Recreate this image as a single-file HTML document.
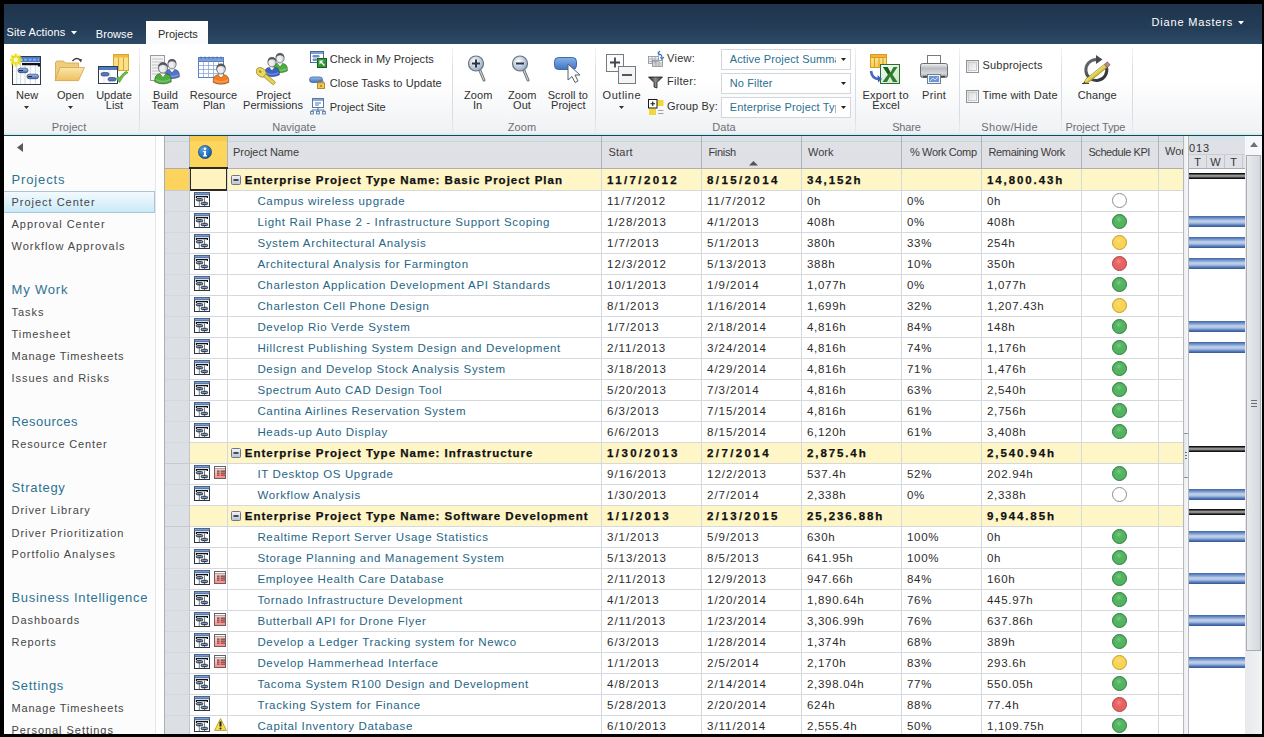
<!DOCTYPE html><html><head><meta charset="utf-8"><style>
html,body{margin:0;padding:0;}
body{width:1264px;height:737px;overflow:hidden;background:#000;position:relative;font-family:"Liberation Sans",sans-serif;}
.a{position:absolute;}
.t{position:absolute;white-space:nowrap;line-height:1;}
</style></head><body>
<div class="a" style="left:4px;top:4px;width:1258px;height:40px;background:linear-gradient(#1f344b,#243d57 60%,#2c4a68);"></div>
<div class="a" style="left:4px;top:44px;width:1258px;height:90px;background:linear-gradient(#ffffff 0%,#ffffff 40%,#f7f8f9 70%,#eff1f3 100%);"></div>
<div class="a" style="left:4px;top:133px;width:1258px;height:2px;background:linear-gradient(#e2f3f7,#c4ecf4);"></div>
<div class="a" style="left:4px;top:135px;width:1258px;height:1px;background:#1d4651;"></div>
<div class="a" style="left:4px;top:136px;width:151px;height:598px;background:#fcfcfc;"></div>
<div class="a" style="left:155px;top:136px;width:1px;height:598px;background:#e6e6e6;"></div>
<div class="a" style="left:156px;top:136px;width:8px;height:598px;background:#ffffff;"></div>
<div class="t" style="left:6.5px;top:27.09px;font-size:11px;color:#ffffff;letter-spacing:0.11px;">Site Actions</div>
<svg class="a" style="left:71px;top:31px" width="6" height="4" viewBox="0 0 6 4"><path d="M0 0H6L3 3.5Z" fill="#fff"/></svg>
<div class="t" style="left:95.8px;top:28.99px;font-size:11px;color:#ffffff;letter-spacing:0.06px;">Browse</div>
<div class="a" style="left:146px;top:21px;width:62px;height:23px;background:linear-gradient(#ffffff,#fafbfc);"></div>
<div class="t" style="left:158.0px;top:28.79px;font-size:11px;color:#2a2a2a;letter-spacing:0.0px;">Projects</div>
<div class="t" style="left:1151.6px;top:17.09px;font-size:11px;color:#ffffff;letter-spacing:0.81px;">Diane Masters</div>
<svg class="a" style="left:1238px;top:21px" width="6" height="4" viewBox="0 0 6 4"><path d="M0 0H6L3 3.5Z" fill="#fff"/></svg>
<div class="a" style="left:139px;top:48px;width:1px;height:84px;background:linear-gradient(rgba(210,214,220,0.3),#d9dde2 30%,#d9dde2 80%,rgba(210,214,220,0.3));"></div>
<div class="a" style="left:452px;top:48px;width:1px;height:84px;background:linear-gradient(rgba(210,214,220,0.3),#d9dde2 30%,#d9dde2 80%,rgba(210,214,220,0.3));"></div>
<div class="a" style="left:595px;top:48px;width:1px;height:84px;background:linear-gradient(rgba(210,214,220,0.3),#d9dde2 30%,#d9dde2 80%,rgba(210,214,220,0.3));"></div>
<div class="a" style="left:855px;top:48px;width:1px;height:84px;background:linear-gradient(rgba(210,214,220,0.3),#d9dde2 30%,#d9dde2 80%,rgba(210,214,220,0.3));"></div>
<div class="a" style="left:959px;top:48px;width:1px;height:84px;background:linear-gradient(rgba(210,214,220,0.3),#d9dde2 30%,#d9dde2 80%,rgba(210,214,220,0.3));"></div>
<div class="a" style="left:1061px;top:48px;width:1px;height:84px;background:linear-gradient(rgba(210,214,220,0.3),#d9dde2 30%,#d9dde2 80%,rgba(210,214,220,0.3));"></div>
<div class="a" style="left:1132px;top:48px;width:1px;height:84px;background:linear-gradient(rgba(210,214,220,0.3),#d9dde2 30%,#d9dde2 80%,rgba(210,214,220,0.3));"></div>
<div class="t" style="left:-81.0px;width:300px;text-align:center;top:121.59px;font-size:11px;color:#6b6f75;letter-spacing:0.03px;text-indent:0.03px;">Project</div>
<div class="t" style="left:144.0px;width:300px;text-align:center;top:121.59px;font-size:11px;color:#6b6f75;letter-spacing:0.03px;text-indent:0.03px;">Navigate</div>
<div class="t" style="left:372.0px;width:300px;text-align:center;top:121.59px;font-size:11px;color:#6b6f75;letter-spacing:0.06px;text-indent:0.06px;">Zoom</div>
<div class="t" style="left:574.0px;width:300px;text-align:center;top:121.59px;font-size:11px;color:#6b6f75;letter-spacing:0.06px;text-indent:0.06px;">Data</div>
<div class="t" style="left:756.5px;width:300px;text-align:center;top:121.59px;font-size:11px;color:#6b6f75;letter-spacing:-0.2px;text-indent:-0.2px;">Share</div>
<div class="t" style="left:859.5px;width:300px;text-align:center;top:121.59px;font-size:11px;color:#6b6f75;letter-spacing:0.4px;text-indent:0.4px;">Show/Hide</div>
<div class="t" style="left:945.5px;width:300px;text-align:center;top:121.59px;font-size:11px;color:#6b6f75;letter-spacing:-0.09px;text-indent:-0.09px;">Project Type</div>
<div class="t" style="left:-123.0px;width:300px;text-align:center;top:89.89px;font-size:11px;color:#303030;letter-spacing:0.1px;text-indent:0.1px;">New</div>
<svg class="a" style="left:24px;top:106px" width="5" height="3" viewBox="0 0 5 3"><path d="M0 0H5L2.5 3Z" fill="#333"/></svg>
<svg class="a" style="left:10px;top:53px" width="34" height="34" viewBox="0 0 34 34">
<defs><linearGradient id="nb" x1="0" y1="0" x2="0" y2="1"><stop offset="0" stop-color="#a9c1ea"/><stop offset="1" stop-color="#3f66ad"/></linearGradient>
<radialGradient id="ns"><stop offset="0" stop-color="#fffbd0"/><stop offset="0.5" stop-color="#f4e640"/><stop offset="1" stop-color="#f4e640" stop-opacity="0"/></radialGradient></defs>
<rect x="2.5" y="3.5" width="28" height="28" fill="#fff" stroke="#2f3b4d"/>
<rect x="3" y="4" width="27" height="5.2" fill="#4f7cc9"/>
<path d="M5 6.6H29" stroke="#8fb0e6" stroke-width="1.6" stroke-dasharray="3 1.5"/>
<g stroke="#c7d0dc" stroke-width="0.8"><path d="M6.7 10V31M10.5 10V31M15 10V31M20.3 10V31M25.4 10V31"/></g>
<g stroke="#e3e8ee" stroke-width="0.6"><path d="M3 14H30M3 18H30M3 22H30M3 26H30"/></g>
<path d="M12 11.2H29V13.5" fill="none" stroke="#111" stroke-width="2.2"/>
<rect x="8" y="15.2" width="10" height="4.5" rx="2.2" fill="url(#nb)" stroke="#243e6e" stroke-width="0.7"/>
<rect x="17" y="21.2" width="11.5" height="4.5" rx="2.2" fill="url(#nb)" stroke="#243e6e" stroke-width="0.7"/>
<path d="M9 17.5H13M18 23.5H22" stroke="#1b2a44" stroke-width="1"/>
<circle cx="5.8" cy="7" r="7" fill="url(#ns)"/>
<g stroke="#e8dc20" stroke-width="1.4"><path d="M5.8 0.5V13.5M-0.7 7H12.3M1.2 2.4L10.4 11.6M10.4 2.4L1.2 11.6"/></g>
<circle cx="5.8" cy="7" r="2.2" fill="#fff8c8"/>
</svg>
<div class="t" style="left:-79.5px;width:300px;text-align:center;top:89.89px;font-size:11px;color:#303030;letter-spacing:0.1px;text-indent:0.1px;">Open</div>
<svg class="a" style="left:68px;top:106px" width="5" height="3" viewBox="0 0 5 3"><path d="M0 0H5L2.5 3Z" fill="#333"/></svg>
<svg class="a" style="left:53px;top:55px" width="34" height="29" viewBox="0 0 34 29">
<defs><linearGradient id="fo" x1="0" y1="0" x2="0" y2="1"><stop offset="0" stop-color="#fbe6a6"/><stop offset="1" stop-color="#eec060"/></linearGradient></defs>
<path d="M2.5 8 Q2.5 6 4.5 6 H10.5 L12.5 8 H25.5 V25 H2.5 Z" fill="#efcd7c" stroke="#cfa24a" stroke-width="0.8"/>
<path d="M7 12.5 H31.5 L25.5 25.6 H2 Z" fill="url(#fo)" stroke="#d1a650" stroke-width="0.8"/>
<path d="M19.5 6 Q23 1.5 27.5 5" fill="none" stroke="#3a3a3a" stroke-width="1.3"/>
<path d="M25.5 4.5 L29 4 L28 7.5 Z" fill="#3a3a3a"/>
</svg>
<div class="t" style="left:-36.0px;width:300px;text-align:center;top:89.89px;font-size:11px;color:#303030;letter-spacing:0.05px;text-indent:0.05px;">Update</div>
<div class="t" style="left:-35.5px;width:300px;text-align:center;top:100.09px;font-size:11px;color:#303030;letter-spacing:0.05px;text-indent:0.05px;">List</div>
<svg class="a" style="left:97px;top:53px" width="34" height="32" viewBox="0 0 34 32">
<rect x="16.5" y="1.5" width="15" height="16" fill="#fbe08a" stroke="#d9a52c"/>
<rect x="17" y="2" width="14" height="2.5" fill="#f1b83c"/>
<path d="M21.5 4.5V17.5M26.5 4.5V17.5" stroke="#d9a52c"/>
<rect x="1.5" y="13.5" width="19" height="17" fill="#fff" stroke="#2f3b4d"/>
<rect x="2" y="14" width="18" height="3" fill="#4f7cc9"/>
<path d="M7 17V30M13 17V30" stroke="#d2d9e3" stroke-width="0.8"/>
<rect x="4" y="19.5" width="8" height="3.5" rx="1.7" fill="#5578bb" stroke="#243e6e" stroke-width="0.6"/>
<rect x="11" y="24.5" width="8" height="3.5" rx="1.7" fill="#5578bb" stroke="#243e6e" stroke-width="0.6"/>
<path d="M19.5 25.5 L22.5 29.5 Q26 22 31 19.5 L29 18.5 Q24.5 21 22.5 25 L21 23.5 Z" fill="#6cc04a" stroke="#3b8a26" stroke-width="0.7"/>
</svg>
<div class="t" style="left:15.5px;width:300px;text-align:center;top:90.09px;font-size:11px;color:#303030;letter-spacing:0.1px;text-indent:0.1px;">Build</div>
<div class="t" style="left:15.0px;width:300px;text-align:center;top:100.09px;font-size:11px;color:#303030;letter-spacing:0.1px;text-indent:0.1px;">Team</div>
<svg class="a" style="left:149px;top:55px" width="32" height="30" viewBox="0 0 32 30">
<rect x="1.5" y="0.5" width="14" height="25" fill="#f4f4f4" stroke="#9a9a9a"/>
<path d="M3 4H14M3 7H14M3 10H14M3 13H14M3 16H14M3 19H14" stroke="#c2c2c2"/>
<g transform="translate(23,12) scale(0.95)">
<path d="M-7.8 10.5 Q-8.6 3.2 -2.6 2.4 L0 5.6 L2.6 2.4 Q8.6 3.2 7.8 10.5 Q0 14.2 -7.8 10.5 Z" fill="#4f74c8" stroke="rgba(0,0,0,0.45)" stroke-width="0.7"/>
<path d="M-7 8 Q0 12 7 8" fill="none" stroke="rgba(255,255,255,0.25)" stroke-width="1.5"/>
<path d="M-2.6 2.4 L0 5.6 L2.6 2.4 Z" fill="#fff"/>
<ellipse cx="0" cy="-3" rx="4.4" ry="5.1" fill="#d3d5d9" stroke="#4e5156" stroke-width="0.7"/>
<ellipse cx="-0.6" cy="-2.2" rx="2.6" ry="3.2" fill="#eceef0"/>
<path d="M-4.4 -3.6 Q-4.6 -8.3 0 -8.2 Q4.6 -8.3 4.4 -3.6 Q2.5 -6.2 0 -6 Q-2.8 -6 -4.4 -3.6Z" fill="#55585d"/>
</g><g transform="translate(14,16) scale(1.05)">
<path d="M-7.8 10.5 Q-8.6 3.2 -2.6 2.4 L0 5.6 L2.6 2.4 Q8.6 3.2 7.8 10.5 Q0 14.2 -7.8 10.5 Z" fill="#4cae3c" stroke="rgba(0,0,0,0.45)" stroke-width="0.7"/>
<path d="M-7 8 Q0 12 7 8" fill="none" stroke="rgba(255,255,255,0.25)" stroke-width="1.5"/>
<path d="M-2.6 2.4 L0 5.6 L2.6 2.4 Z" fill="#fff"/>
<ellipse cx="0" cy="-3" rx="4.4" ry="5.1" fill="#d3d5d9" stroke="#4e5156" stroke-width="0.7"/>
<ellipse cx="-0.6" cy="-2.2" rx="2.6" ry="3.2" fill="#eceef0"/>
<path d="M-4.4 -3.6 Q-4.6 -8.3 0 -8.2 Q4.6 -8.3 4.4 -3.6 Q2.5 -6.2 0 -6 Q-2.8 -6 -4.4 -3.6Z" fill="#55585d"/>
</g></svg>
<div class="t" style="left:63.5px;width:300px;text-align:center;top:90.09px;font-size:11px;color:#303030;letter-spacing:0.05px;text-indent:0.05px;">Resource</div>
<div class="t" style="left:64.0px;width:300px;text-align:center;top:100.09px;font-size:11px;color:#303030;letter-spacing:0.05px;text-indent:0.05px;">Plan</div>
<svg class="a" style="left:197px;top:54px" width="34" height="32" viewBox="0 0 34 32">
<rect x="1.5" y="3.5" width="25" height="20" fill="#fff" stroke="#5a7fbf"/>
<rect x="1.5" y="3.5" width="25" height="4" fill="#7d9fd8" stroke="#5a7fbf"/>
<g fill="none" stroke="#4a6fb0" stroke-width="0.9"><path d="M4 5V2.5M8 5V2.5M12 5V2.5M16 5V2.5M20 5V2.5M24 5V2.5"/></g>
<path d="M1.5 11.5H26.5M1.5 15.5H26.5M1.5 19.5H26.5M6.5 7.5V23.5M11.5 7.5V23.5M16.5 7.5V23.5M21.5 7.5V23.5" stroke="#8aa6d4" stroke-width="0.8"/>
<g transform="translate(24,18) scale(1.0)">
<path d="M-7.8 10.5 Q-8.6 3.2 -2.6 2.4 L0 5.6 L2.6 2.4 Q8.6 3.2 7.8 10.5 Q0 14.2 -7.8 10.5 Z" fill="#f07d24" stroke="rgba(0,0,0,0.45)" stroke-width="0.7"/>
<path d="M-7 8 Q0 12 7 8" fill="none" stroke="rgba(255,255,255,0.25)" stroke-width="1.5"/>
<path d="M-2.6 2.4 L0 5.6 L2.6 2.4 Z" fill="#fff"/>
<ellipse cx="0" cy="-3" rx="4.4" ry="5.1" fill="#d3d5d9" stroke="#4e5156" stroke-width="0.7"/>
<ellipse cx="-0.6" cy="-2.2" rx="2.6" ry="3.2" fill="#eceef0"/>
<path d="M-4.4 -3.6 Q-4.6 -8.3 0 -8.2 Q4.6 -8.3 4.4 -3.6 Q2.5 -6.2 0 -6 Q-2.8 -6 -4.4 -3.6Z" fill="#55585d"/>
</g></svg>
<div class="t" style="left:123.5px;width:300px;text-align:center;top:90.09px;font-size:11px;color:#303030;letter-spacing:0.05px;text-indent:0.05px;">Project</div>
<div class="t" style="left:123.0px;width:300px;text-align:center;top:100.09px;font-size:11px;color:#303030;letter-spacing:-0.01px;text-indent:-0.01px;">Permissions</div>
<svg class="a" style="left:256px;top:52px" width="34" height="34" viewBox="0 0 34 34">
<g transform="translate(24,9) scale(0.95)">
<path d="M-7.8 10.5 Q-8.6 3.2 -2.6 2.4 L0 5.6 L2.6 2.4 Q8.6 3.2 7.8 10.5 Q0 14.2 -7.8 10.5 Z" fill="#4bae3c" stroke="rgba(0,0,0,0.45)" stroke-width="0.7"/>
<path d="M-7 8 Q0 12 7 8" fill="none" stroke="rgba(255,255,255,0.25)" stroke-width="1.5"/>
<path d="M-2.6 2.4 L0 5.6 L2.6 2.4 Z" fill="#fff"/>
<ellipse cx="0" cy="-3" rx="4.4" ry="5.1" fill="#d3d5d9" stroke="#4e5156" stroke-width="0.7"/>
<ellipse cx="-0.6" cy="-2.2" rx="2.6" ry="3.2" fill="#eceef0"/>
<path d="M-4.4 -3.6 Q-4.6 -8.3 0 -8.2 Q4.6 -8.3 4.4 -3.6 Q2.5 -6.2 0 -6 Q-2.8 -6 -4.4 -3.6Z" fill="#55585d"/>
</g><g transform="translate(16,13) scale(0.95)">
<path d="M-7.8 10.5 Q-8.6 3.2 -2.6 2.4 L0 5.6 L2.6 2.4 Q8.6 3.2 7.8 10.5 Q0 14.2 -7.8 10.5 Z" fill="#3b62c8" stroke="rgba(0,0,0,0.45)" stroke-width="0.7"/>
<path d="M-7 8 Q0 12 7 8" fill="none" stroke="rgba(255,255,255,0.25)" stroke-width="1.5"/>
<path d="M-2.6 2.4 L0 5.6 L2.6 2.4 Z" fill="#fff"/>
<ellipse cx="0" cy="-3" rx="4.4" ry="5.1" fill="#d3d5d9" stroke="#4e5156" stroke-width="0.7"/>
<ellipse cx="-0.6" cy="-2.2" rx="2.6" ry="3.2" fill="#eceef0"/>
<path d="M-4.4 -3.6 Q-4.6 -8.3 0 -8.2 Q4.6 -8.3 4.4 -3.6 Q2.5 -6.2 0 -6 Q-2.8 -6 -4.4 -3.6Z" fill="#55585d"/>
</g>
<g transform="rotate(40 6 21)"><ellipse cx="5" cy="21" rx="5.5" ry="4.2" fill="#ecd860" stroke="#9a8a28" stroke-width="0.8"/><rect x="9.5" y="19.3" width="13" height="3.6" rx="1" fill="#e6d050" stroke="#9a8a28" stroke-width="0.7"/><ellipse cx="3.6" cy="21" rx="1.6" ry="1.2" fill="#a8962e"/></g>
</svg>
<div class="t" style="left:329.7px;top:54.29px;font-size:11px;color:#303030;letter-spacing:0.04px;">Check in My Projects</div>
<div class="t" style="left:329.7px;top:77.69px;font-size:11px;color:#303030;letter-spacing:0.11px;">Close Tasks to Update</div>
<div class="t" style="left:329.7px;top:101.79px;font-size:11px;color:#303030;letter-spacing:-0.02px;">Project Site</div>
<svg class="a" style="left:309px;top:50px" width="18" height="18" viewBox="0 0 18 18">
<rect x="1.5" y="1.5" width="13" height="11" fill="#fff" stroke="#4a6a9a"/>
<rect x="2" y="2" width="12" height="2" fill="#7da0d8"/>
<rect x="3.5" y="5" width="7" height="2.5" rx="1.2" fill="#7090c8"/>
<rect x="3.5" y="8.5" width="5" height="2.5" rx="1.2" fill="#7090c8"/>
<rect x="8.5" y="8.5" width="9" height="9" fill="#2f9a38" stroke="#1a5e20"/>
<path d="M15.5 15.5L12 12" stroke="#fff" stroke-width="1.3"/><path d="M10.5 10.5H14.5L10.5 14.5Z" fill="#fff"/>
</svg>
<svg class="a" style="left:309px;top:76px" width="18" height="15" viewBox="0 0 18 15">
<defs><linearGradient id="lp" x1="0" y1="0" x2="0" y2="1"><stop offset="0" stop-color="#9cc0ec"/><stop offset="1" stop-color="#3f6fb8"/></linearGradient></defs>
<rect x="0.5" y="1" width="13" height="5.5" rx="2.75" fill="url(#lp)" stroke="#3a66a8" stroke-width="0.8"/>
<path d="M10 7 V5.2 Q12 2.8 14 5.2 V7" fill="none" stroke="#7a7a7a" stroke-width="1.1"/>
<rect x="8.5" y="6.8" width="7" height="5.7" fill="#f2c850" stroke="#b08420" stroke-width="0.9"/>
<rect x="11.5" y="9" width="1" height="1.8" fill="#6a4a10"/>
</svg>
<svg class="a" style="left:310px;top:98px" width="17" height="17" viewBox="0 0 17 17">
<rect x="2.5" y="0.5" width="11" height="9" fill="#fff" stroke="#5578a8"/>
<rect x="3" y="1" width="10" height="2" fill="#8aaad8"/>
<path d="M5 5H11M5 7H9" stroke="#5578a8"/>
<path d="M8 9.5V12M2 12H14M2 12V14M8 12V14M14 12V14" stroke="#5578a8" fill="none"/>
<rect x="0.5" y="13.5" width="3" height="2.5" fill="#dde6f2" stroke="#5578a8" stroke-width="0.8"/>
<rect x="6.5" y="13.5" width="3" height="2.5" fill="#dde6f2" stroke="#5578a8" stroke-width="0.8"/>
<rect x="12.5" y="13.5" width="3" height="2.5" fill="#dde6f2" stroke="#5578a8" stroke-width="0.8"/>
</svg>
<div class="t" style="left:328.2px;width:300px;text-align:center;top:89.99px;font-size:11px;color:#303030;letter-spacing:0.06px;text-indent:0.06px;">Zoom</div>
<div class="t" style="left:327.5px;width:300px;text-align:center;top:99.89px;font-size:11px;color:#303030;letter-spacing:0.06px;text-indent:0.06px;">In</div>
<svg class="a" style="left:467px;top:54px" width="20" height="29" viewBox="0 0 20 29"><defs><radialGradient id="mg43" cx="0.4" cy="0.35" r="0.7"><stop offset="0" stop-color="#ffffff"/><stop offset="1" stop-color="#8fa6c4"/></radialGradient></defs>
<path d="M12.5 15.5 L17 26" stroke="#6a6e73" stroke-width="3" stroke-linecap="round"/>
<path d="M12.5 15.5 L17 26" stroke="#c9ccd0" stroke-width="1.2" stroke-linecap="round"/>
<circle cx="9" cy="9.5" r="7.5" fill="url(#mg43)" stroke="#6a7480" stroke-width="1.2"/><path d="M5 9.5H13M9 5.5V13.5" stroke="#2f3640" stroke-width="2"/></svg>
<div class="t" style="left:372.2px;width:300px;text-align:center;top:89.99px;font-size:11px;color:#303030;letter-spacing:0.06px;text-indent:0.06px;">Zoom</div>
<div class="t" style="left:372.0px;width:300px;text-align:center;top:99.89px;font-size:11px;color:#303030;letter-spacing:0.06px;text-indent:0.06px;">Out</div>
<svg class="a" style="left:511px;top:54px" width="20" height="29" viewBox="0 0 20 29"><defs><radialGradient id="mg45" cx="0.4" cy="0.35" r="0.7"><stop offset="0" stop-color="#ffffff"/><stop offset="1" stop-color="#8fa6c4"/></radialGradient></defs>
<path d="M12.5 15.5 L17 26" stroke="#6a6e73" stroke-width="3" stroke-linecap="round"/>
<path d="M12.5 15.5 L17 26" stroke="#c9ccd0" stroke-width="1.2" stroke-linecap="round"/>
<circle cx="9" cy="9.5" r="7.5" fill="url(#mg45)" stroke="#6a7480" stroke-width="1.2"/><path d="M5 9.5H13" stroke="#2f3640" stroke-width="2"/></svg>
<div class="t" style="left:417.8px;width:300px;text-align:center;top:89.99px;font-size:11px;color:#303030;letter-spacing:0.05px;text-indent:0.05px;">Scroll to</div>
<div class="t" style="left:418.3px;width:300px;text-align:center;top:99.89px;font-size:11px;color:#303030;letter-spacing:0.05px;text-indent:0.05px;">Project</div>
<svg class="a" style="left:554px;top:57px" width="29" height="27" viewBox="0 0 29 27">
<defs><linearGradient id="sg" x1="0" y1="0" x2="0" y2="1"><stop offset="0" stop-color="#86b0ea"/><stop offset="1" stop-color="#3f73c4"/></linearGradient></defs>
<rect x="0.5" y="0.5" width="22" height="12" rx="4" fill="url(#sg)" stroke="#3d68ad"/>
<path d="M14 7 L14 23 L18 19.5 L21 25.5 L24 24 L21 18 L26 18 Z" fill="#fff" stroke="#5a5f66" stroke-width="1"/>
</svg>
<div class="t" style="left:471.6px;width:300px;text-align:center;top:89.89px;font-size:11px;color:#303030;letter-spacing:0.52px;text-indent:0.52px;">Outline</div>
<svg class="a" style="left:619px;top:106px" width="5" height="3" viewBox="0 0 5 3"><path d="M0 0H5L2.5 3Z" fill="#333"/></svg>
<svg class="a" style="left:605px;top:53px" width="33" height="32" viewBox="0 0 33 32">
<rect x="1.5" y="1.5" width="17" height="17" fill="#fbfbfb" stroke="#767b82"/>
<path d="M5 9.5H15M10 4.5V14.5" stroke="#40454c" stroke-width="1.8"/>
<rect x="13.5" y="13.5" width="17" height="17" fill="#f2f4f6" stroke="#767b82"/>
<path d="M17 22H27" stroke="#40454c" stroke-width="1.8"/>
</svg>
<div class="t" style="left:667.0px;top:52.79px;font-size:11px;color:#303030;letter-spacing:0.3px;">View:</div>
<div class="t" style="left:667.0px;top:76.29px;font-size:11px;color:#303030;letter-spacing:0.3px;">Filter:</div>
<div class="t" style="left:667.0px;top:100.89px;font-size:11px;color:#303030;letter-spacing:0.15px;">Group By:</div>
<svg class="a" style="left:647px;top:50px" width="18" height="18" viewBox="0 0 18 18">
<g stroke="#8a8f96" stroke-width="0.8" fill="#eef1f4"><rect x="1.5" y="6.5" width="10" height="7"/><rect x="5.5" y="10.5" width="10" height="6"/></g>
<path d="M1.5 9H11.5M1.5 11.5H11.5M5 6.5V13.5M8 6.5V13.5M5.5 13H15.5M5.5 15H15.5M9 10.5V16.5M12 10.5V16.5" stroke="#8a8f96" stroke-width="0.6"/>
<path d="M11 5 Q15 3 15 8" fill="none" stroke="#3b6dc0" stroke-width="1.2"/>
<path d="M13 1 L11 3 L13 5" fill="none" stroke="#3b6dc0" stroke-width="1.1"/>
<path d="M13.5 7 L15 9.5 L16.8 7" fill="none" stroke="#3b6dc0" stroke-width="1.1"/>
</svg>
<svg class="a" style="left:648px;top:76px" width="16" height="13" viewBox="0 0 16 13">
<defs><linearGradient id="fg" x1="0" x2="1"><stop offset="0" stop-color="#202020"/><stop offset="0.5" stop-color="#8a8a8a"/><stop offset="1" stop-color="#303030"/></linearGradient></defs>
<path d="M0.5 1 H14.5 L9 6.5 V12 L6 11 V6.5 Z" fill="url(#fg)" stroke="#222" stroke-width="0.8"/>
</svg>
<svg class="a" style="left:647px;top:98px" width="18" height="18" viewBox="0 0 18 18">
<rect x="10" y="2" width="6.5" height="6" fill="#f0d83a"/>
<rect x="2" y="10.5" width="7" height="6.5" fill="#f0d83a"/>
<path d="M11 12.5H16.5M11 15.5H16.5" stroke="#9a9a9a" stroke-width="0.9"/>
<rect x="1.5" y="1.5" width="8.5" height="8.5" fill="#fff" stroke="#1a1a1a"/>
<path d="M3.5 5.75H8M5.75 3.5V8" stroke="#1a1a1a" stroke-width="1.1"/>
</svg>
<div class="a" style="left:721px;top:49px;width:130px;height:21px;box-sizing:border-box;border:1px solid #d3d6da;background:#fff;"></div>
<div class="a" style="left:722px;top:50px;width:114px;height:19px;overflow:hidden;"><div class="t" style="left:7.7px;top:4.29px;font-size:11px;color:#2a6f92;letter-spacing:0.15px">Active Project Summa</div></div>
<svg class="a" style="left:841px;top:58px" width="6" height="4" viewBox="0 0 6 4"><path d="M0 0H5L2.5 3Z" fill="#222"/></svg>
<div class="a" style="left:721px;top:73px;width:130px;height:21px;box-sizing:border-box;border:1px solid #d3d6da;background:#fff;"></div>
<div class="a" style="left:722px;top:74px;width:114px;height:19px;overflow:hidden;"><div class="t" style="left:7.7px;top:4.44px;font-size:11px;color:#2a6f92;letter-spacing:0.15px">No Filter</div></div>
<svg class="a" style="left:841px;top:82px" width="6" height="4" viewBox="0 0 6 4"><path d="M0 0H5L2.5 3Z" fill="#222"/></svg>
<div class="a" style="left:721px;top:97px;width:130px;height:21px;box-sizing:border-box;border:1px solid #d3d6da;background:#fff;"></div>
<div class="a" style="left:722px;top:98px;width:114px;height:19px;overflow:hidden;"><div class="t" style="left:7.7px;top:4.19px;font-size:11px;color:#2a6f92;letter-spacing:0.15px">Enterprise Project Typ</div></div>
<svg class="a" style="left:841px;top:106px" width="6" height="4" viewBox="0 0 6 4"><path d="M0 0H5L2.5 3Z" fill="#222"/></svg>
<div class="t" style="left:735.5px;width:300px;text-align:center;top:89.89px;font-size:11px;color:#303030;letter-spacing:0.25px;text-indent:0.25px;">Export to</div>
<div class="t" style="left:736.0px;width:300px;text-align:center;top:99.69px;font-size:11px;color:#303030;letter-spacing:0.1px;text-indent:0.1px;">Excel</div>
<svg class="a" style="left:869px;top:53px" width="32" height="32" viewBox="0 0 32 32">
<defs><linearGradient id="xg" x1="0" y1="0" x2="1" y2="1"><stop offset="0" stop-color="#f4fbf2"/><stop offset="1" stop-color="#c9e8c4"/></linearGradient>
<linearGradient id="yt" x1="0" y1="0" x2="0" y2="1"><stop offset="0" stop-color="#fde79a"/><stop offset="1" stop-color="#f6cf5c"/></linearGradient></defs>
<rect x="1.5" y="1.5" width="16" height="13" fill="url(#yt)" stroke="#d99a1e"/>
<rect x="1.5" y="1.5" width="16" height="3" fill="#f0b53a" stroke="#d99a1e"/>
<path d="M5.5 4.5V14.5M10 4.5V14.5M14 4.5V14.5" stroke="#d99a1e"/>
<rect x="11.5" y="11.5" width="19" height="19" fill="url(#xg)" stroke="#2f6a34"/>
<path d="M14 14 H18.5 L21.5 19.5 L24.5 14 H28.5 L23.5 21.5 L28.5 29 H24 L21 23.5 L18 29 H13.5 L19 21.5 Z" fill="#2f7d32"/>
<path d="M14 14 H18.5 L21.5 19.5 L19 21.5 Z" fill="#1f5e22"/>
<path d="M2 18 Q3 26 10 26" fill="none" stroke="#4668c4" stroke-width="2.6"/>
<path d="M8.5 22 L13 26 L9 29.5 Z" fill="#3f5fb8"/>
</svg>
<div class="t" style="left:784.0px;width:300px;text-align:center;top:89.89px;font-size:11px;color:#303030;letter-spacing:0.3px;text-indent:0.3px;">Print</div>
<svg class="a" style="left:919px;top:54px" width="31" height="31" viewBox="0 0 31 31">
<defs><linearGradient id="pg" x1="0" y1="0" x2="0" y2="1"><stop offset="0" stop-color="#f2f3f4"/><stop offset="0.35" stop-color="#b9bcc0"/><stop offset="0.7" stop-color="#d6d8da"/><stop offset="1" stop-color="#8d9196"/></linearGradient></defs>
<rect x="8.5" y="1.5" width="13" height="9" fill="#fff" stroke="#777b80"/>
<rect x="1.5" y="9.5" width="27" height="14" rx="2" fill="url(#pg)" stroke="#6a6e73"/>
<path d="M4 22.5H26" stroke="#444" stroke-width="1.2"/>
<rect x="8.5" y="20.5" width="13" height="9" fill="#eef3fa" stroke="#6f7f98"/>
<rect x="10" y="22" width="10" height="6" fill="#6d97d4"/>
<path d="M11 27 L14 24 L16 26 L19 23" stroke="#dbe7f7" stroke-width="0.8" fill="none"/>
</svg>
<div class="a" style="left:966px;top:60px;width:13px;height:13px;box-sizing:border-box;border:1px solid #8f9398;background:linear-gradient(135deg,#d9dbde,#ffffff);"></div>
<div class="a" style="left:968px;top:62px;width:9px;height:9px;box-sizing:border-box;border:1px solid #c9cbce;background:linear-gradient(135deg,#dcdde0,#f6f6f7);"></div>
<div class="a" style="left:966px;top:90px;width:13px;height:13px;box-sizing:border-box;border:1px solid #8f9398;background:linear-gradient(135deg,#d9dbde,#ffffff);"></div>
<div class="a" style="left:968px;top:92px;width:9px;height:9px;box-sizing:border-box;border:1px solid #c9cbce;background:linear-gradient(135deg,#dcdde0,#f6f6f7);"></div>
<div class="t" style="left:982.5px;top:60.19px;font-size:11px;color:#303030;letter-spacing:0.19px;">Subprojects</div>
<div class="t" style="left:982.5px;top:90.19px;font-size:11px;color:#303030;letter-spacing:0.16px;">Time with Date</div>
<div class="t" style="left:947.2px;width:300px;text-align:center;top:90.19px;font-size:11px;color:#303030;letter-spacing:0.09px;text-indent:0.09px;">Change</div>
<svg class="a" style="left:1080px;top:52px" width="32" height="34" viewBox="0 0 32 34">
<defs><linearGradient id="cg" x1="0" y1="0" x2="1" y2="1"><stop offset="0" stop-color="#6a6d71"/><stop offset="1" stop-color="#2a2d30"/></linearGradient>
<linearGradient id="pc" x1="0" y1="0" x2="0" y2="1"><stop offset="0" stop-color="#f8f0a0"/><stop offset="0.5" stop-color="#e6d84a"/><stop offset="1" stop-color="#c9b22c"/></linearGradient></defs>
<path d="M26.4 15 A10.5 10.5 0 1 1 16.5 7.5" fill="none" stroke="url(#cg)" stroke-width="3"/>
<path d="M16 3 L22.5 7.6 L16 12 Z" fill="#45484c"/>
<g transform="translate(3,32) rotate(-38.5)">
<path d="M0 0 L5.5 -2.1 H29 V2.1 H5.5 Z" fill="url(#pc)" stroke="#8a7a30" stroke-width="0.6"/>
<path d="M0 0 L2.6 -1.1 V1.1 Z" fill="#333"/>
<path d="M8 -0.8H28M8 0.8H28" stroke="#d2bf3a" stroke-width="0.5"/>
<rect x="29" y="-2.1" width="4" height="4.2" fill="#b08a8a" stroke="#7a5a50" stroke-width="0.6"/>
</g>
<path d="M2 31.5 H9" stroke="#4a4a4a" stroke-width="1"/>
</svg>
<svg class="a" style="left:17px;top:143px" width="6" height="9" viewBox="0 0 6 9"><path d="M6 0V9L0 4.5Z" fill="#5a5a5a"/></svg>
<div class="a" style="left:4px;top:191px;width:151px;height:22px;box-sizing:border-box;border:1px solid #adc4d4;border-left:none;background:linear-gradient(#f2fafe,#dcf0fb 60%,#c9eaf9);"></div>
<div class="t" style="left:11.5px;top:173.00px;font-size:13px;color:#2c7393;letter-spacing:0.86px;">Projects</div>
<div class="t" style="left:11.5px;top:197.29px;font-size:11px;color:#464646;letter-spacing:0.98px;">Project Center</div>
<div class="t" style="left:11.5px;top:219.29px;font-size:11px;color:#464646;letter-spacing:0.97px;">Approval Center</div>
<div class="t" style="left:11.5px;top:241.29px;font-size:11px;color:#464646;letter-spacing:0.98px;">Workflow Approvals</div>
<div class="t" style="left:11.5px;top:283.30px;font-size:13px;color:#2c7393;letter-spacing:0.83px;">My Work</div>
<div class="t" style="left:11.5px;top:307.29px;font-size:11px;color:#464646;letter-spacing:0.95px;">Tasks</div>
<div class="t" style="left:11.5px;top:329.09px;font-size:11px;color:#464646;letter-spacing:0.95px;">Timesheet</div>
<div class="t" style="left:11.5px;top:351.09px;font-size:11px;color:#464646;letter-spacing:0.81px;">Manage Timesheets</div>
<div class="t" style="left:11.5px;top:372.99px;font-size:11px;color:#464646;letter-spacing:0.95px;">Issues and Risks</div>
<div class="t" style="left:11.5px;top:414.80px;font-size:13px;color:#2c7393;letter-spacing:0.48px;">Resources</div>
<div class="t" style="left:11.5px;top:439.29px;font-size:11px;color:#464646;letter-spacing:0.85px;">Resource Center</div>
<div class="t" style="left:11.5px;top:481.30px;font-size:13px;color:#2c7393;letter-spacing:0.7px;">Strategy</div>
<div class="t" style="left:11.5px;top:505.29px;font-size:11px;color:#464646;letter-spacing:0.95px;">Driver Library</div>
<div class="t" style="left:11.5px;top:527.59px;font-size:11px;color:#464646;letter-spacing:0.95px;">Driver Prioritization</div>
<div class="t" style="left:11.5px;top:549.29px;font-size:11px;color:#464646;letter-spacing:0.95px;">Portfolio Analyses</div>
<div class="t" style="left:11.5px;top:591.10px;font-size:13px;color:#2c7393;letter-spacing:0.69px;">Business Intelligence</div>
<div class="t" style="left:11.5px;top:615.29px;font-size:11px;color:#464646;letter-spacing:0.95px;">Dashboards</div>
<div class="t" style="left:11.5px;top:636.79px;font-size:11px;color:#464646;letter-spacing:0.95px;">Reports</div>
<div class="t" style="left:11.5px;top:678.80px;font-size:13px;color:#2c7393;letter-spacing:0.7px;">Settings</div>
<div class="t" style="left:11.5px;top:703.29px;font-size:11px;color:#464646;letter-spacing:0.81px;">Manage Timesheets</div>
<div class="t" style="left:11.5px;top:725.29px;font-size:11px;color:#464646;letter-spacing:0.95px;">Personal Settings</div>
<div class="a" style="left:164px;top:136px;width:1019px;height:598px;background:#ffffff;"></div>
<div class="a" style="left:164px;top:136px;width:1019px;height:32px;background:linear-gradient(#e6dcec 0px,#e6dcec 1px,#d8e3e8 1px,#d8e3e8 5px,#ccd3d6 5px,#ccd3d6 6px,#dfe1e5 6px,#e0e0e6 100%);"></div>
<div class="a" style="left:164px;top:168px;width:1019px;height:1px;background:#acafaa;"></div>
<div class="a" style="left:189px;top:136px;width:38px;height:32px;background:linear-gradient(#f6c84a 0px,#f8cc50 5px,#fcd65e 6px,#fbd45a 100%);"></div>
<div class="a" style="left:164px;top:136px;width:1px;height:32px;background:#aeb3ba;"></div>
<div class="a" style="left:189px;top:136px;width:1px;height:32px;background:#aeb3ba;"></div>
<div class="a" style="left:227px;top:136px;width:1px;height:32px;background:#aeb3ba;"></div>
<div class="a" style="left:601px;top:136px;width:1px;height:32px;background:#aeb3ba;"></div>
<div class="a" style="left:701px;top:136px;width:1px;height:32px;background:#aeb3ba;"></div>
<div class="a" style="left:801px;top:136px;width:1px;height:32px;background:#aeb3ba;"></div>
<div class="a" style="left:901px;top:136px;width:1px;height:32px;background:#aeb3ba;"></div>
<div class="a" style="left:981px;top:136px;width:1px;height:32px;background:#aeb3ba;"></div>
<div class="a" style="left:1081px;top:136px;width:1px;height:32px;background:#aeb3ba;"></div>
<div class="a" style="left:1158px;top:136px;width:1px;height:32px;background:#aeb3ba;"></div>
<div class="t" style="left:233.0px;top:146.99px;font-size:11px;color:#3c3c3c;letter-spacing:-0.05px;">Project Name</div>
<div class="t" style="left:608.6px;top:146.99px;font-size:11px;color:#3c3c3c;letter-spacing:0.19px;">Start</div>
<div class="t" style="left:708.4px;top:146.99px;font-size:11px;color:#3c3c3c;letter-spacing:-0.3px;">Finish</div>
<svg class="a" style="left:749px;top:161px" width="9" height="5" viewBox="0 0 9 5"><path d="M0 4.5H9L4.5 0Z" fill="#555"/></svg>
<div class="t" style="left:808.0px;top:146.99px;font-size:11px;color:#3c3c3c;letter-spacing:0.0px;">Work</div>
<div class="t" style="left:910.0px;top:146.99px;font-size:11px;color:#3c3c3c;letter-spacing:-0.37px;">% Work Comp</div>
<div class="t" style="left:988.4px;top:146.99px;font-size:11px;color:#3c3c3c;letter-spacing:-0.32px;">Remaining Work</div>
<div class="t" style="left:1088.4px;top:146.99px;font-size:11px;color:#3c3c3c;letter-spacing:-0.42px;">Schedule KPI</div>
<div class="a" style="left:1159px;top:136px;width:24px;height:32px;overflow:hidden"><div class="t" style="left:6px;top:10.39px;font-size:11px;color:#3c3c3c;letter-spacing:0px">Work</div></div>
<svg class="a" style="left:198px;top:145px" width="14" height="14" viewBox="0 0 14 14">
<defs><radialGradient id="ig" cx="0.35" cy="0.3" r="0.8"><stop offset="0" stop-color="#5aa8e8"/><stop offset="1" stop-color="#0d4f9e"/></radialGradient></defs>
<circle cx="7" cy="7" r="6.6" fill="url(#ig)" stroke="#0b3f7e" stroke-width="0.6"/>
<circle cx="7" cy="3.7" r="1.3" fill="#fff"/>
<path d="M5.2 5.9H8V10.2H9V11.4H5V10.2H6V7.1H5.2Z" fill="#fff"/>
</svg>
<div class="a" style="left:164px;top:169px;width:25px;height:21px;background:#fcd35c;"></div>
<div class="a" style="left:189px;top:169px;width:994px;height:21px;background:#fff6c7;"></div>
<div class="a" style="left:164px;top:190px;width:1019px;height:1px;background:#d5d8dd;"></div>
<div class="a" style="left:164px;top:190px;width:25px;height:1px;background:#c7cbd1;"></div>
<svg class="a" style="left:231px;top:175px" width="10" height="10" viewBox="0 0 10 10"><defs><linearGradient id="mb0" x1="0" y1="0" x2="0" y2="1"><stop offset="0" stop-color="#f4f7fb"/><stop offset="1" stop-color="#b4c2d4"/></linearGradient></defs><rect x="0.5" y="0.5" width="9" height="9" rx="1" fill="url(#mb0)" stroke="#6f7680"/><path d="M2.5 5H7.5" stroke="#1a1a1a" stroke-width="1.5"/></svg>
<div class="t" style="left:244.8px;top:174.87px;font-size:11.5px;color:#111;letter-spacing:1.0px;font-weight:700;-webkit-text-stroke:0.25px #111;">Enterprise Project Type Name: Basic Project Plan</div>
<div class="t" style="left:607.0px;top:174.87px;font-size:11.5px;color:#111;letter-spacing:2.4px;font-weight:700;-webkit-text-stroke:0.25px #111;">11/7/2012</div>
<div class="t" style="left:707.0px;top:174.87px;font-size:11.5px;color:#111;letter-spacing:2.4px;font-weight:700;-webkit-text-stroke:0.25px #111;">8/15/2014</div>
<div class="t" style="left:807.0px;top:174.87px;font-size:11.5px;color:#111;letter-spacing:1.9px;font-weight:700;-webkit-text-stroke:0.25px #111;">34,152h</div>
<div class="t" style="left:987.0px;top:174.87px;font-size:11.5px;color:#111;letter-spacing:1.9px;font-weight:700;-webkit-text-stroke:0.25px #111;">14,800.43h</div>
<div class="a" style="left:164px;top:191px;width:25px;height:20px;background:#dcdfe4;"></div>
<div class="a" style="left:164px;top:211px;width:1019px;height:1px;background:#d5d8dd;"></div>
<svg class="a" style="left:194px;top:192px" width="16" height="15" viewBox="0 0 16 15">
<defs><linearGradient id="pt" x1="0" y1="0" x2="0" y2="1"><stop offset="0" stop-color="#9cb6dc"/><stop offset="1" stop-color="#4f76b4"/></linearGradient>
<linearGradient id="po" x1="0" y1="0" x2="0" y2="1"><stop offset="0" stop-color="#a9bedc"/><stop offset="1" stop-color="#4f6f9c"/></linearGradient></defs>
<rect x="0.5" y="0.5" width="15" height="14" fill="#fff" stroke="#2c3542"/>
<rect x="0.5" y="0.5" width="15" height="2.4" fill="url(#pt)" stroke="#3c5c8e" stroke-width="0.6"/>
<path d="M5.3 8.5V14.5M10.5 5.5V10.5M10.5 12.5V14.5" stroke="#3a4350" stroke-width="0.7"/>
<path d="M2.4 6V4.6H13.4V6" fill="none" stroke="#111" stroke-width="1.2"/>
<rect x="2.3" y="6.6" width="6.4" height="2.2" rx="1.1" fill="url(#po)" stroke="#18222f" stroke-width="0.9"/>
<rect x="7.2" y="10.3" width="6.4" height="2.4" rx="1.2" fill="url(#po)" stroke="#18222f" stroke-width="0.9"/>
</svg>
<div class="t" style="left:257.4px;top:195.87px;font-size:11.5px;color:#266585;letter-spacing:0.65px;">Campus wireless upgrade</div>
<div class="t" style="left:607.0px;top:195.87px;font-size:11.5px;color:#2b2b2b;letter-spacing:0.98px;">11/7/2012</div>
<div class="t" style="left:707.0px;top:195.87px;font-size:11.5px;color:#2b2b2b;letter-spacing:0.98px;">11/7/2012</div>
<div class="t" style="left:807.0px;top:195.87px;font-size:11.5px;color:#2b2b2b;letter-spacing:0.7px;">0h</div>
<div class="t" style="left:907.0px;top:195.87px;font-size:11.5px;color:#2b2b2b;letter-spacing:0.7px;">0%</div>
<div class="t" style="left:987.0px;top:195.87px;font-size:11.5px;color:#2b2b2b;letter-spacing:0.7px;">0h</div>
<svg class="a" style="left:1112px;top:193px" width="15" height="15" viewBox="0 0 15 15"><circle cx="7.5" cy="7.5" r="7" fill="#fff" stroke="#8d8d8d" stroke-width="1"/></svg>
<div class="a" style="left:164px;top:212px;width:25px;height:20px;background:#dcdfe4;"></div>
<div class="a" style="left:164px;top:232px;width:1019px;height:1px;background:#d5d8dd;"></div>
<svg class="a" style="left:194px;top:213px" width="16" height="15" viewBox="0 0 16 15">
<defs><linearGradient id="pt" x1="0" y1="0" x2="0" y2="1"><stop offset="0" stop-color="#9cb6dc"/><stop offset="1" stop-color="#4f76b4"/></linearGradient>
<linearGradient id="po" x1="0" y1="0" x2="0" y2="1"><stop offset="0" stop-color="#a9bedc"/><stop offset="1" stop-color="#4f6f9c"/></linearGradient></defs>
<rect x="0.5" y="0.5" width="15" height="14" fill="#fff" stroke="#2c3542"/>
<rect x="0.5" y="0.5" width="15" height="2.4" fill="url(#pt)" stroke="#3c5c8e" stroke-width="0.6"/>
<path d="M5.3 8.5V14.5M10.5 5.5V10.5M10.5 12.5V14.5" stroke="#3a4350" stroke-width="0.7"/>
<path d="M2.4 6V4.6H13.4V6" fill="none" stroke="#111" stroke-width="1.2"/>
<rect x="2.3" y="6.6" width="6.4" height="2.2" rx="1.1" fill="url(#po)" stroke="#18222f" stroke-width="0.9"/>
<rect x="7.2" y="10.3" width="6.4" height="2.4" rx="1.2" fill="url(#po)" stroke="#18222f" stroke-width="0.9"/>
</svg>
<div class="t" style="left:257.4px;top:216.87px;font-size:11.5px;color:#266585;letter-spacing:0.65px;">Light Rail Phase 2 - Infrastructure Support Scoping</div>
<div class="t" style="left:607.0px;top:216.87px;font-size:11.5px;color:#2b2b2b;letter-spacing:0.98px;">1/28/2013</div>
<div class="t" style="left:707.0px;top:216.87px;font-size:11.5px;color:#2b2b2b;letter-spacing:0.98px;">4/1/2013</div>
<div class="t" style="left:807.0px;top:216.87px;font-size:11.5px;color:#2b2b2b;letter-spacing:0.7px;">408h</div>
<div class="t" style="left:907.0px;top:216.87px;font-size:11.5px;color:#2b2b2b;letter-spacing:0.7px;">0%</div>
<div class="t" style="left:987.0px;top:216.87px;font-size:11.5px;color:#2b2b2b;letter-spacing:0.7px;">408h</div>
<svg class="a" style="left:1112px;top:214px" width="15" height="15" viewBox="0 0 15 15"><defs><radialGradient id="k2" cx="0.45" cy="0.35" r="0.7"><stop offset="0" stop-color="#ffffff" stop-opacity="0.3"/><stop offset="0.5" stop-color="#52b460" stop-opacity="0"/></radialGradient></defs><circle cx="7.5" cy="7.5" r="7" fill="#52b460" stroke="#2f7a3a" stroke-width="1"/><circle cx="7.5" cy="7.5" r="6.5" fill="url(#k2)"/></svg>
<div class="a" style="left:164px;top:233px;width:25px;height:20px;background:#dcdfe4;"></div>
<div class="a" style="left:164px;top:253px;width:1019px;height:1px;background:#d5d8dd;"></div>
<svg class="a" style="left:194px;top:234px" width="16" height="15" viewBox="0 0 16 15">
<defs><linearGradient id="pt" x1="0" y1="0" x2="0" y2="1"><stop offset="0" stop-color="#9cb6dc"/><stop offset="1" stop-color="#4f76b4"/></linearGradient>
<linearGradient id="po" x1="0" y1="0" x2="0" y2="1"><stop offset="0" stop-color="#a9bedc"/><stop offset="1" stop-color="#4f6f9c"/></linearGradient></defs>
<rect x="0.5" y="0.5" width="15" height="14" fill="#fff" stroke="#2c3542"/>
<rect x="0.5" y="0.5" width="15" height="2.4" fill="url(#pt)" stroke="#3c5c8e" stroke-width="0.6"/>
<path d="M5.3 8.5V14.5M10.5 5.5V10.5M10.5 12.5V14.5" stroke="#3a4350" stroke-width="0.7"/>
<path d="M2.4 6V4.6H13.4V6" fill="none" stroke="#111" stroke-width="1.2"/>
<rect x="2.3" y="6.6" width="6.4" height="2.2" rx="1.1" fill="url(#po)" stroke="#18222f" stroke-width="0.9"/>
<rect x="7.2" y="10.3" width="6.4" height="2.4" rx="1.2" fill="url(#po)" stroke="#18222f" stroke-width="0.9"/>
</svg>
<div class="t" style="left:257.4px;top:237.87px;font-size:11.5px;color:#266585;letter-spacing:0.65px;">System Architectural Analysis</div>
<div class="t" style="left:607.0px;top:237.87px;font-size:11.5px;color:#2b2b2b;letter-spacing:0.98px;">1/7/2013</div>
<div class="t" style="left:707.0px;top:237.87px;font-size:11.5px;color:#2b2b2b;letter-spacing:0.98px;">5/1/2013</div>
<div class="t" style="left:807.0px;top:237.87px;font-size:11.5px;color:#2b2b2b;letter-spacing:0.7px;">380h</div>
<div class="t" style="left:907.0px;top:237.87px;font-size:11.5px;color:#2b2b2b;letter-spacing:0.7px;">33%</div>
<div class="t" style="left:987.0px;top:237.87px;font-size:11.5px;color:#2b2b2b;letter-spacing:0.7px;">254h</div>
<svg class="a" style="left:1112px;top:235px" width="15" height="15" viewBox="0 0 15 15"><defs><radialGradient id="k3" cx="0.45" cy="0.35" r="0.7"><stop offset="0" stop-color="#ffffff" stop-opacity="0.3"/><stop offset="0.5" stop-color="#f8d454" stop-opacity="0"/></radialGradient></defs><circle cx="7.5" cy="7.5" r="7" fill="#f8d454" stroke="#c99a2c" stroke-width="1"/><circle cx="7.5" cy="7.5" r="6.5" fill="url(#k3)"/></svg>
<div class="a" style="left:164px;top:254px;width:25px;height:20px;background:#dcdfe4;"></div>
<div class="a" style="left:164px;top:274px;width:1019px;height:1px;background:#d5d8dd;"></div>
<svg class="a" style="left:194px;top:255px" width="16" height="15" viewBox="0 0 16 15">
<defs><linearGradient id="pt" x1="0" y1="0" x2="0" y2="1"><stop offset="0" stop-color="#9cb6dc"/><stop offset="1" stop-color="#4f76b4"/></linearGradient>
<linearGradient id="po" x1="0" y1="0" x2="0" y2="1"><stop offset="0" stop-color="#a9bedc"/><stop offset="1" stop-color="#4f6f9c"/></linearGradient></defs>
<rect x="0.5" y="0.5" width="15" height="14" fill="#fff" stroke="#2c3542"/>
<rect x="0.5" y="0.5" width="15" height="2.4" fill="url(#pt)" stroke="#3c5c8e" stroke-width="0.6"/>
<path d="M5.3 8.5V14.5M10.5 5.5V10.5M10.5 12.5V14.5" stroke="#3a4350" stroke-width="0.7"/>
<path d="M2.4 6V4.6H13.4V6" fill="none" stroke="#111" stroke-width="1.2"/>
<rect x="2.3" y="6.6" width="6.4" height="2.2" rx="1.1" fill="url(#po)" stroke="#18222f" stroke-width="0.9"/>
<rect x="7.2" y="10.3" width="6.4" height="2.4" rx="1.2" fill="url(#po)" stroke="#18222f" stroke-width="0.9"/>
</svg>
<div class="t" style="left:257.4px;top:258.87px;font-size:11.5px;color:#266585;letter-spacing:0.65px;">Architectural Analysis for Farmington</div>
<div class="t" style="left:607.0px;top:258.87px;font-size:11.5px;color:#2b2b2b;letter-spacing:0.98px;">12/3/2012</div>
<div class="t" style="left:707.0px;top:258.87px;font-size:11.5px;color:#2b2b2b;letter-spacing:0.98px;">5/13/2013</div>
<div class="t" style="left:807.0px;top:258.87px;font-size:11.5px;color:#2b2b2b;letter-spacing:0.7px;">388h</div>
<div class="t" style="left:907.0px;top:258.87px;font-size:11.5px;color:#2b2b2b;letter-spacing:0.7px;">10%</div>
<div class="t" style="left:987.0px;top:258.87px;font-size:11.5px;color:#2b2b2b;letter-spacing:0.7px;">350h</div>
<svg class="a" style="left:1112px;top:256px" width="15" height="15" viewBox="0 0 15 15"><defs><radialGradient id="k4" cx="0.45" cy="0.35" r="0.7"><stop offset="0" stop-color="#ffffff" stop-opacity="0.3"/><stop offset="0.5" stop-color="#e96262" stop-opacity="0"/></radialGradient></defs><circle cx="7.5" cy="7.5" r="7" fill="#e96262" stroke="#a84444" stroke-width="1"/><circle cx="7.5" cy="7.5" r="6.5" fill="url(#k4)"/></svg>
<div class="a" style="left:164px;top:275px;width:25px;height:20px;background:#dcdfe4;"></div>
<div class="a" style="left:164px;top:295px;width:1019px;height:1px;background:#d5d8dd;"></div>
<svg class="a" style="left:194px;top:276px" width="16" height="15" viewBox="0 0 16 15">
<defs><linearGradient id="pt" x1="0" y1="0" x2="0" y2="1"><stop offset="0" stop-color="#9cb6dc"/><stop offset="1" stop-color="#4f76b4"/></linearGradient>
<linearGradient id="po" x1="0" y1="0" x2="0" y2="1"><stop offset="0" stop-color="#a9bedc"/><stop offset="1" stop-color="#4f6f9c"/></linearGradient></defs>
<rect x="0.5" y="0.5" width="15" height="14" fill="#fff" stroke="#2c3542"/>
<rect x="0.5" y="0.5" width="15" height="2.4" fill="url(#pt)" stroke="#3c5c8e" stroke-width="0.6"/>
<path d="M5.3 8.5V14.5M10.5 5.5V10.5M10.5 12.5V14.5" stroke="#3a4350" stroke-width="0.7"/>
<path d="M2.4 6V4.6H13.4V6" fill="none" stroke="#111" stroke-width="1.2"/>
<rect x="2.3" y="6.6" width="6.4" height="2.2" rx="1.1" fill="url(#po)" stroke="#18222f" stroke-width="0.9"/>
<rect x="7.2" y="10.3" width="6.4" height="2.4" rx="1.2" fill="url(#po)" stroke="#18222f" stroke-width="0.9"/>
</svg>
<div class="t" style="left:257.4px;top:279.87px;font-size:11.5px;color:#266585;letter-spacing:0.65px;">Charleston Application Development API Standards</div>
<div class="t" style="left:607.0px;top:279.87px;font-size:11.5px;color:#2b2b2b;letter-spacing:0.98px;">10/1/2013</div>
<div class="t" style="left:707.0px;top:279.87px;font-size:11.5px;color:#2b2b2b;letter-spacing:0.98px;">1/9/2014</div>
<div class="t" style="left:807.0px;top:279.87px;font-size:11.5px;color:#2b2b2b;letter-spacing:0.7px;">1,077h</div>
<div class="t" style="left:907.0px;top:279.87px;font-size:11.5px;color:#2b2b2b;letter-spacing:0.7px;">0%</div>
<div class="t" style="left:987.0px;top:279.87px;font-size:11.5px;color:#2b2b2b;letter-spacing:0.7px;">1,077h</div>
<svg class="a" style="left:1112px;top:277px" width="15" height="15" viewBox="0 0 15 15"><defs><radialGradient id="k5" cx="0.45" cy="0.35" r="0.7"><stop offset="0" stop-color="#ffffff" stop-opacity="0.3"/><stop offset="0.5" stop-color="#52b460" stop-opacity="0"/></radialGradient></defs><circle cx="7.5" cy="7.5" r="7" fill="#52b460" stroke="#2f7a3a" stroke-width="1"/><circle cx="7.5" cy="7.5" r="6.5" fill="url(#k5)"/></svg>
<div class="a" style="left:164px;top:296px;width:25px;height:20px;background:#dcdfe4;"></div>
<div class="a" style="left:164px;top:316px;width:1019px;height:1px;background:#d5d8dd;"></div>
<svg class="a" style="left:194px;top:297px" width="16" height="15" viewBox="0 0 16 15">
<defs><linearGradient id="pt" x1="0" y1="0" x2="0" y2="1"><stop offset="0" stop-color="#9cb6dc"/><stop offset="1" stop-color="#4f76b4"/></linearGradient>
<linearGradient id="po" x1="0" y1="0" x2="0" y2="1"><stop offset="0" stop-color="#a9bedc"/><stop offset="1" stop-color="#4f6f9c"/></linearGradient></defs>
<rect x="0.5" y="0.5" width="15" height="14" fill="#fff" stroke="#2c3542"/>
<rect x="0.5" y="0.5" width="15" height="2.4" fill="url(#pt)" stroke="#3c5c8e" stroke-width="0.6"/>
<path d="M5.3 8.5V14.5M10.5 5.5V10.5M10.5 12.5V14.5" stroke="#3a4350" stroke-width="0.7"/>
<path d="M2.4 6V4.6H13.4V6" fill="none" stroke="#111" stroke-width="1.2"/>
<rect x="2.3" y="6.6" width="6.4" height="2.2" rx="1.1" fill="url(#po)" stroke="#18222f" stroke-width="0.9"/>
<rect x="7.2" y="10.3" width="6.4" height="2.4" rx="1.2" fill="url(#po)" stroke="#18222f" stroke-width="0.9"/>
</svg>
<div class="t" style="left:257.4px;top:300.87px;font-size:11.5px;color:#266585;letter-spacing:0.65px;">Charleston Cell Phone Design</div>
<div class="t" style="left:607.0px;top:300.87px;font-size:11.5px;color:#2b2b2b;letter-spacing:0.98px;">8/1/2013</div>
<div class="t" style="left:707.0px;top:300.87px;font-size:11.5px;color:#2b2b2b;letter-spacing:0.98px;">1/16/2014</div>
<div class="t" style="left:807.0px;top:300.87px;font-size:11.5px;color:#2b2b2b;letter-spacing:0.7px;">1,699h</div>
<div class="t" style="left:907.0px;top:300.87px;font-size:11.5px;color:#2b2b2b;letter-spacing:0.7px;">32%</div>
<div class="t" style="left:987.0px;top:300.87px;font-size:11.5px;color:#2b2b2b;letter-spacing:0.7px;">1,207.43h</div>
<svg class="a" style="left:1112px;top:298px" width="15" height="15" viewBox="0 0 15 15"><defs><radialGradient id="k6" cx="0.45" cy="0.35" r="0.7"><stop offset="0" stop-color="#ffffff" stop-opacity="0.3"/><stop offset="0.5" stop-color="#f8d454" stop-opacity="0"/></radialGradient></defs><circle cx="7.5" cy="7.5" r="7" fill="#f8d454" stroke="#c99a2c" stroke-width="1"/><circle cx="7.5" cy="7.5" r="6.5" fill="url(#k6)"/></svg>
<div class="a" style="left:164px;top:317px;width:25px;height:20px;background:#dcdfe4;"></div>
<div class="a" style="left:164px;top:337px;width:1019px;height:1px;background:#d5d8dd;"></div>
<svg class="a" style="left:194px;top:318px" width="16" height="15" viewBox="0 0 16 15">
<defs><linearGradient id="pt" x1="0" y1="0" x2="0" y2="1"><stop offset="0" stop-color="#9cb6dc"/><stop offset="1" stop-color="#4f76b4"/></linearGradient>
<linearGradient id="po" x1="0" y1="0" x2="0" y2="1"><stop offset="0" stop-color="#a9bedc"/><stop offset="1" stop-color="#4f6f9c"/></linearGradient></defs>
<rect x="0.5" y="0.5" width="15" height="14" fill="#fff" stroke="#2c3542"/>
<rect x="0.5" y="0.5" width="15" height="2.4" fill="url(#pt)" stroke="#3c5c8e" stroke-width="0.6"/>
<path d="M5.3 8.5V14.5M10.5 5.5V10.5M10.5 12.5V14.5" stroke="#3a4350" stroke-width="0.7"/>
<path d="M2.4 6V4.6H13.4V6" fill="none" stroke="#111" stroke-width="1.2"/>
<rect x="2.3" y="6.6" width="6.4" height="2.2" rx="1.1" fill="url(#po)" stroke="#18222f" stroke-width="0.9"/>
<rect x="7.2" y="10.3" width="6.4" height="2.4" rx="1.2" fill="url(#po)" stroke="#18222f" stroke-width="0.9"/>
</svg>
<div class="t" style="left:257.4px;top:321.87px;font-size:11.5px;color:#266585;letter-spacing:0.65px;">Develop Rio Verde System</div>
<div class="t" style="left:607.0px;top:321.87px;font-size:11.5px;color:#2b2b2b;letter-spacing:0.98px;">1/7/2013</div>
<div class="t" style="left:707.0px;top:321.87px;font-size:11.5px;color:#2b2b2b;letter-spacing:0.98px;">2/18/2014</div>
<div class="t" style="left:807.0px;top:321.87px;font-size:11.5px;color:#2b2b2b;letter-spacing:0.7px;">4,816h</div>
<div class="t" style="left:907.0px;top:321.87px;font-size:11.5px;color:#2b2b2b;letter-spacing:0.7px;">84%</div>
<div class="t" style="left:987.0px;top:321.87px;font-size:11.5px;color:#2b2b2b;letter-spacing:0.7px;">148h</div>
<svg class="a" style="left:1112px;top:319px" width="15" height="15" viewBox="0 0 15 15"><defs><radialGradient id="k7" cx="0.45" cy="0.35" r="0.7"><stop offset="0" stop-color="#ffffff" stop-opacity="0.3"/><stop offset="0.5" stop-color="#52b460" stop-opacity="0"/></radialGradient></defs><circle cx="7.5" cy="7.5" r="7" fill="#52b460" stroke="#2f7a3a" stroke-width="1"/><circle cx="7.5" cy="7.5" r="6.5" fill="url(#k7)"/></svg>
<div class="a" style="left:164px;top:338px;width:25px;height:20px;background:#dcdfe4;"></div>
<div class="a" style="left:164px;top:358px;width:1019px;height:1px;background:#d5d8dd;"></div>
<svg class="a" style="left:194px;top:339px" width="16" height="15" viewBox="0 0 16 15">
<defs><linearGradient id="pt" x1="0" y1="0" x2="0" y2="1"><stop offset="0" stop-color="#9cb6dc"/><stop offset="1" stop-color="#4f76b4"/></linearGradient>
<linearGradient id="po" x1="0" y1="0" x2="0" y2="1"><stop offset="0" stop-color="#a9bedc"/><stop offset="1" stop-color="#4f6f9c"/></linearGradient></defs>
<rect x="0.5" y="0.5" width="15" height="14" fill="#fff" stroke="#2c3542"/>
<rect x="0.5" y="0.5" width="15" height="2.4" fill="url(#pt)" stroke="#3c5c8e" stroke-width="0.6"/>
<path d="M5.3 8.5V14.5M10.5 5.5V10.5M10.5 12.5V14.5" stroke="#3a4350" stroke-width="0.7"/>
<path d="M2.4 6V4.6H13.4V6" fill="none" stroke="#111" stroke-width="1.2"/>
<rect x="2.3" y="6.6" width="6.4" height="2.2" rx="1.1" fill="url(#po)" stroke="#18222f" stroke-width="0.9"/>
<rect x="7.2" y="10.3" width="6.4" height="2.4" rx="1.2" fill="url(#po)" stroke="#18222f" stroke-width="0.9"/>
</svg>
<div class="t" style="left:257.4px;top:342.87px;font-size:11.5px;color:#266585;letter-spacing:0.65px;">Hillcrest Publishing System Design and Development</div>
<div class="t" style="left:607.0px;top:342.87px;font-size:11.5px;color:#2b2b2b;letter-spacing:0.98px;">2/11/2013</div>
<div class="t" style="left:707.0px;top:342.87px;font-size:11.5px;color:#2b2b2b;letter-spacing:0.98px;">3/24/2014</div>
<div class="t" style="left:807.0px;top:342.87px;font-size:11.5px;color:#2b2b2b;letter-spacing:0.7px;">4,816h</div>
<div class="t" style="left:907.0px;top:342.87px;font-size:11.5px;color:#2b2b2b;letter-spacing:0.7px;">74%</div>
<div class="t" style="left:987.0px;top:342.87px;font-size:11.5px;color:#2b2b2b;letter-spacing:0.7px;">1,176h</div>
<svg class="a" style="left:1112px;top:340px" width="15" height="15" viewBox="0 0 15 15"><defs><radialGradient id="k8" cx="0.45" cy="0.35" r="0.7"><stop offset="0" stop-color="#ffffff" stop-opacity="0.3"/><stop offset="0.5" stop-color="#52b460" stop-opacity="0"/></radialGradient></defs><circle cx="7.5" cy="7.5" r="7" fill="#52b460" stroke="#2f7a3a" stroke-width="1"/><circle cx="7.5" cy="7.5" r="6.5" fill="url(#k8)"/></svg>
<div class="a" style="left:164px;top:359px;width:25px;height:20px;background:#dcdfe4;"></div>
<div class="a" style="left:164px;top:379px;width:1019px;height:1px;background:#d5d8dd;"></div>
<svg class="a" style="left:194px;top:360px" width="16" height="15" viewBox="0 0 16 15">
<defs><linearGradient id="pt" x1="0" y1="0" x2="0" y2="1"><stop offset="0" stop-color="#9cb6dc"/><stop offset="1" stop-color="#4f76b4"/></linearGradient>
<linearGradient id="po" x1="0" y1="0" x2="0" y2="1"><stop offset="0" stop-color="#a9bedc"/><stop offset="1" stop-color="#4f6f9c"/></linearGradient></defs>
<rect x="0.5" y="0.5" width="15" height="14" fill="#fff" stroke="#2c3542"/>
<rect x="0.5" y="0.5" width="15" height="2.4" fill="url(#pt)" stroke="#3c5c8e" stroke-width="0.6"/>
<path d="M5.3 8.5V14.5M10.5 5.5V10.5M10.5 12.5V14.5" stroke="#3a4350" stroke-width="0.7"/>
<path d="M2.4 6V4.6H13.4V6" fill="none" stroke="#111" stroke-width="1.2"/>
<rect x="2.3" y="6.6" width="6.4" height="2.2" rx="1.1" fill="url(#po)" stroke="#18222f" stroke-width="0.9"/>
<rect x="7.2" y="10.3" width="6.4" height="2.4" rx="1.2" fill="url(#po)" stroke="#18222f" stroke-width="0.9"/>
</svg>
<div class="t" style="left:257.4px;top:363.87px;font-size:11.5px;color:#266585;letter-spacing:0.65px;">Design and Develop Stock Analysis System</div>
<div class="t" style="left:607.0px;top:363.87px;font-size:11.5px;color:#2b2b2b;letter-spacing:0.98px;">3/18/2013</div>
<div class="t" style="left:707.0px;top:363.87px;font-size:11.5px;color:#2b2b2b;letter-spacing:0.98px;">4/29/2014</div>
<div class="t" style="left:807.0px;top:363.87px;font-size:11.5px;color:#2b2b2b;letter-spacing:0.7px;">4,816h</div>
<div class="t" style="left:907.0px;top:363.87px;font-size:11.5px;color:#2b2b2b;letter-spacing:0.7px;">71%</div>
<div class="t" style="left:987.0px;top:363.87px;font-size:11.5px;color:#2b2b2b;letter-spacing:0.7px;">1,476h</div>
<svg class="a" style="left:1112px;top:361px" width="15" height="15" viewBox="0 0 15 15"><defs><radialGradient id="k9" cx="0.45" cy="0.35" r="0.7"><stop offset="0" stop-color="#ffffff" stop-opacity="0.3"/><stop offset="0.5" stop-color="#52b460" stop-opacity="0"/></radialGradient></defs><circle cx="7.5" cy="7.5" r="7" fill="#52b460" stroke="#2f7a3a" stroke-width="1"/><circle cx="7.5" cy="7.5" r="6.5" fill="url(#k9)"/></svg>
<div class="a" style="left:164px;top:380px;width:25px;height:20px;background:#dcdfe4;"></div>
<div class="a" style="left:164px;top:400px;width:1019px;height:1px;background:#d5d8dd;"></div>
<svg class="a" style="left:194px;top:381px" width="16" height="15" viewBox="0 0 16 15">
<defs><linearGradient id="pt" x1="0" y1="0" x2="0" y2="1"><stop offset="0" stop-color="#9cb6dc"/><stop offset="1" stop-color="#4f76b4"/></linearGradient>
<linearGradient id="po" x1="0" y1="0" x2="0" y2="1"><stop offset="0" stop-color="#a9bedc"/><stop offset="1" stop-color="#4f6f9c"/></linearGradient></defs>
<rect x="0.5" y="0.5" width="15" height="14" fill="#fff" stroke="#2c3542"/>
<rect x="0.5" y="0.5" width="15" height="2.4" fill="url(#pt)" stroke="#3c5c8e" stroke-width="0.6"/>
<path d="M5.3 8.5V14.5M10.5 5.5V10.5M10.5 12.5V14.5" stroke="#3a4350" stroke-width="0.7"/>
<path d="M2.4 6V4.6H13.4V6" fill="none" stroke="#111" stroke-width="1.2"/>
<rect x="2.3" y="6.6" width="6.4" height="2.2" rx="1.1" fill="url(#po)" stroke="#18222f" stroke-width="0.9"/>
<rect x="7.2" y="10.3" width="6.4" height="2.4" rx="1.2" fill="url(#po)" stroke="#18222f" stroke-width="0.9"/>
</svg>
<div class="t" style="left:257.4px;top:384.87px;font-size:11.5px;color:#266585;letter-spacing:0.65px;">Spectrum Auto CAD Design Tool</div>
<div class="t" style="left:607.0px;top:384.87px;font-size:11.5px;color:#2b2b2b;letter-spacing:0.98px;">5/20/2013</div>
<div class="t" style="left:707.0px;top:384.87px;font-size:11.5px;color:#2b2b2b;letter-spacing:0.98px;">7/3/2014</div>
<div class="t" style="left:807.0px;top:384.87px;font-size:11.5px;color:#2b2b2b;letter-spacing:0.7px;">4,816h</div>
<div class="t" style="left:907.0px;top:384.87px;font-size:11.5px;color:#2b2b2b;letter-spacing:0.7px;">63%</div>
<div class="t" style="left:987.0px;top:384.87px;font-size:11.5px;color:#2b2b2b;letter-spacing:0.7px;">2,540h</div>
<svg class="a" style="left:1112px;top:382px" width="15" height="15" viewBox="0 0 15 15"><defs><radialGradient id="k10" cx="0.45" cy="0.35" r="0.7"><stop offset="0" stop-color="#ffffff" stop-opacity="0.3"/><stop offset="0.5" stop-color="#52b460" stop-opacity="0"/></radialGradient></defs><circle cx="7.5" cy="7.5" r="7" fill="#52b460" stroke="#2f7a3a" stroke-width="1"/><circle cx="7.5" cy="7.5" r="6.5" fill="url(#k10)"/></svg>
<div class="a" style="left:164px;top:401px;width:25px;height:20px;background:#dcdfe4;"></div>
<div class="a" style="left:164px;top:421px;width:1019px;height:1px;background:#d5d8dd;"></div>
<svg class="a" style="left:194px;top:402px" width="16" height="15" viewBox="0 0 16 15">
<defs><linearGradient id="pt" x1="0" y1="0" x2="0" y2="1"><stop offset="0" stop-color="#9cb6dc"/><stop offset="1" stop-color="#4f76b4"/></linearGradient>
<linearGradient id="po" x1="0" y1="0" x2="0" y2="1"><stop offset="0" stop-color="#a9bedc"/><stop offset="1" stop-color="#4f6f9c"/></linearGradient></defs>
<rect x="0.5" y="0.5" width="15" height="14" fill="#fff" stroke="#2c3542"/>
<rect x="0.5" y="0.5" width="15" height="2.4" fill="url(#pt)" stroke="#3c5c8e" stroke-width="0.6"/>
<path d="M5.3 8.5V14.5M10.5 5.5V10.5M10.5 12.5V14.5" stroke="#3a4350" stroke-width="0.7"/>
<path d="M2.4 6V4.6H13.4V6" fill="none" stroke="#111" stroke-width="1.2"/>
<rect x="2.3" y="6.6" width="6.4" height="2.2" rx="1.1" fill="url(#po)" stroke="#18222f" stroke-width="0.9"/>
<rect x="7.2" y="10.3" width="6.4" height="2.4" rx="1.2" fill="url(#po)" stroke="#18222f" stroke-width="0.9"/>
</svg>
<div class="t" style="left:257.4px;top:405.87px;font-size:11.5px;color:#266585;letter-spacing:0.65px;">Cantina Airlines Reservation System</div>
<div class="t" style="left:607.0px;top:405.87px;font-size:11.5px;color:#2b2b2b;letter-spacing:0.98px;">6/3/2013</div>
<div class="t" style="left:707.0px;top:405.87px;font-size:11.5px;color:#2b2b2b;letter-spacing:0.98px;">7/15/2014</div>
<div class="t" style="left:807.0px;top:405.87px;font-size:11.5px;color:#2b2b2b;letter-spacing:0.7px;">4,816h</div>
<div class="t" style="left:907.0px;top:405.87px;font-size:11.5px;color:#2b2b2b;letter-spacing:0.7px;">61%</div>
<div class="t" style="left:987.0px;top:405.87px;font-size:11.5px;color:#2b2b2b;letter-spacing:0.7px;">2,756h</div>
<svg class="a" style="left:1112px;top:403px" width="15" height="15" viewBox="0 0 15 15"><defs><radialGradient id="k11" cx="0.45" cy="0.35" r="0.7"><stop offset="0" stop-color="#ffffff" stop-opacity="0.3"/><stop offset="0.5" stop-color="#52b460" stop-opacity="0"/></radialGradient></defs><circle cx="7.5" cy="7.5" r="7" fill="#52b460" stroke="#2f7a3a" stroke-width="1"/><circle cx="7.5" cy="7.5" r="6.5" fill="url(#k11)"/></svg>
<div class="a" style="left:164px;top:422px;width:25px;height:20px;background:#dcdfe4;"></div>
<div class="a" style="left:164px;top:442px;width:1019px;height:1px;background:#d5d8dd;"></div>
<svg class="a" style="left:194px;top:423px" width="16" height="15" viewBox="0 0 16 15">
<defs><linearGradient id="pt" x1="0" y1="0" x2="0" y2="1"><stop offset="0" stop-color="#9cb6dc"/><stop offset="1" stop-color="#4f76b4"/></linearGradient>
<linearGradient id="po" x1="0" y1="0" x2="0" y2="1"><stop offset="0" stop-color="#a9bedc"/><stop offset="1" stop-color="#4f6f9c"/></linearGradient></defs>
<rect x="0.5" y="0.5" width="15" height="14" fill="#fff" stroke="#2c3542"/>
<rect x="0.5" y="0.5" width="15" height="2.4" fill="url(#pt)" stroke="#3c5c8e" stroke-width="0.6"/>
<path d="M5.3 8.5V14.5M10.5 5.5V10.5M10.5 12.5V14.5" stroke="#3a4350" stroke-width="0.7"/>
<path d="M2.4 6V4.6H13.4V6" fill="none" stroke="#111" stroke-width="1.2"/>
<rect x="2.3" y="6.6" width="6.4" height="2.2" rx="1.1" fill="url(#po)" stroke="#18222f" stroke-width="0.9"/>
<rect x="7.2" y="10.3" width="6.4" height="2.4" rx="1.2" fill="url(#po)" stroke="#18222f" stroke-width="0.9"/>
</svg>
<div class="t" style="left:257.4px;top:426.87px;font-size:11.5px;color:#266585;letter-spacing:0.65px;">Heads-up Auto Display</div>
<div class="t" style="left:607.0px;top:426.87px;font-size:11.5px;color:#2b2b2b;letter-spacing:0.98px;">6/6/2013</div>
<div class="t" style="left:707.0px;top:426.87px;font-size:11.5px;color:#2b2b2b;letter-spacing:0.98px;">8/15/2014</div>
<div class="t" style="left:807.0px;top:426.87px;font-size:11.5px;color:#2b2b2b;letter-spacing:0.7px;">6,120h</div>
<div class="t" style="left:907.0px;top:426.87px;font-size:11.5px;color:#2b2b2b;letter-spacing:0.7px;">61%</div>
<div class="t" style="left:987.0px;top:426.87px;font-size:11.5px;color:#2b2b2b;letter-spacing:0.7px;">3,408h</div>
<svg class="a" style="left:1112px;top:424px" width="15" height="15" viewBox="0 0 15 15"><defs><radialGradient id="k12" cx="0.45" cy="0.35" r="0.7"><stop offset="0" stop-color="#ffffff" stop-opacity="0.3"/><stop offset="0.5" stop-color="#52b460" stop-opacity="0"/></radialGradient></defs><circle cx="7.5" cy="7.5" r="7" fill="#52b460" stroke="#2f7a3a" stroke-width="1"/><circle cx="7.5" cy="7.5" r="6.5" fill="url(#k12)"/></svg>
<div class="a" style="left:164px;top:443px;width:25px;height:20px;background:#dcdfe4;"></div>
<div class="a" style="left:189px;top:443px;width:994px;height:20px;background:#fff6c7;"></div>
<div class="a" style="left:164px;top:463px;width:1019px;height:1px;background:#d5d8dd;"></div>
<div class="a" style="left:164px;top:463px;width:25px;height:1px;background:#c7cbd1;"></div>
<svg class="a" style="left:231px;top:448px" width="10" height="10" viewBox="0 0 10 10"><defs><linearGradient id="mb13" x1="0" y1="0" x2="0" y2="1"><stop offset="0" stop-color="#f4f7fb"/><stop offset="1" stop-color="#b4c2d4"/></linearGradient></defs><rect x="0.5" y="0.5" width="9" height="9" rx="1" fill="url(#mb13)" stroke="#6f7680"/><path d="M2.5 5H7.5" stroke="#1a1a1a" stroke-width="1.5"/></svg>
<div class="t" style="left:244.8px;top:447.87px;font-size:11.5px;color:#111;letter-spacing:1.0px;font-weight:700;-webkit-text-stroke:0.25px #111;">Enterprise Project Type Name: Infrastructure</div>
<div class="t" style="left:607.0px;top:447.87px;font-size:11.5px;color:#111;letter-spacing:2.4px;font-weight:700;-webkit-text-stroke:0.25px #111;">1/30/2013</div>
<div class="t" style="left:707.0px;top:447.87px;font-size:11.5px;color:#111;letter-spacing:2.4px;font-weight:700;-webkit-text-stroke:0.25px #111;">2/7/2014</div>
<div class="t" style="left:807.0px;top:447.87px;font-size:11.5px;color:#111;letter-spacing:1.9px;font-weight:700;-webkit-text-stroke:0.25px #111;">2,875.4h</div>
<div class="t" style="left:987.0px;top:447.87px;font-size:11.5px;color:#111;letter-spacing:1.9px;font-weight:700;-webkit-text-stroke:0.25px #111;">2,540.94h</div>
<div class="a" style="left:164px;top:464px;width:25px;height:20px;background:#dcdfe4;"></div>
<div class="a" style="left:164px;top:484px;width:1019px;height:1px;background:#d5d8dd;"></div>
<svg class="a" style="left:194px;top:465px" width="16" height="15" viewBox="0 0 16 15">
<defs><linearGradient id="pt" x1="0" y1="0" x2="0" y2="1"><stop offset="0" stop-color="#9cb6dc"/><stop offset="1" stop-color="#4f76b4"/></linearGradient>
<linearGradient id="po" x1="0" y1="0" x2="0" y2="1"><stop offset="0" stop-color="#a9bedc"/><stop offset="1" stop-color="#4f6f9c"/></linearGradient></defs>
<rect x="0.5" y="0.5" width="15" height="14" fill="#fff" stroke="#2c3542"/>
<rect x="0.5" y="0.5" width="15" height="2.4" fill="url(#pt)" stroke="#3c5c8e" stroke-width="0.6"/>
<path d="M5.3 8.5V14.5M10.5 5.5V10.5M10.5 12.5V14.5" stroke="#3a4350" stroke-width="0.7"/>
<path d="M2.4 6V4.6H13.4V6" fill="none" stroke="#111" stroke-width="1.2"/>
<rect x="2.3" y="6.6" width="6.4" height="2.2" rx="1.1" fill="url(#po)" stroke="#18222f" stroke-width="0.9"/>
<rect x="7.2" y="10.3" width="6.4" height="2.4" rx="1.2" fill="url(#po)" stroke="#18222f" stroke-width="0.9"/>
</svg>
<svg class="a" style="left:214px;top:466px" width="12" height="13" viewBox="0 0 12 13">
<defs><linearGradient id="ib" x1="0" y1="0" x2="0" y2="1"><stop offset="0" stop-color="#f4eeee"/><stop offset="1" stop-color="#f08a8a"/></linearGradient></defs>
<rect x="0.5" y="0.5" width="11" height="12" fill="url(#ib)" stroke="#6e5e5e"/>
<rect x="1" y="1" width="10" height="1.3" fill="#ffffff"/>
<path d="M1 2.6H11" stroke="#8a7a7a" stroke-width="0.7"/>
<path d="M3 5.2H5.6M6.6 5.2H11M3 7.2H5.6M6.6 7.2H11" stroke="#6e3a34" stroke-width="1.2"/>
<path d="M3 9.2H5.6M6.6 9.2H11" stroke="#c02a2a" stroke-width="1.2"/>
</svg>
<div class="t" style="left:257.4px;top:468.87px;font-size:11.5px;color:#266585;letter-spacing:0.65px;">IT Desktop OS Upgrade</div>
<div class="t" style="left:607.0px;top:468.87px;font-size:11.5px;color:#2b2b2b;letter-spacing:0.98px;">9/16/2013</div>
<div class="t" style="left:707.0px;top:468.87px;font-size:11.5px;color:#2b2b2b;letter-spacing:0.98px;">12/2/2013</div>
<div class="t" style="left:807.0px;top:468.87px;font-size:11.5px;color:#2b2b2b;letter-spacing:0.7px;">537.4h</div>
<div class="t" style="left:907.0px;top:468.87px;font-size:11.5px;color:#2b2b2b;letter-spacing:0.7px;">52%</div>
<div class="t" style="left:987.0px;top:468.87px;font-size:11.5px;color:#2b2b2b;letter-spacing:0.7px;">202.94h</div>
<svg class="a" style="left:1112px;top:466px" width="15" height="15" viewBox="0 0 15 15"><defs><radialGradient id="k14" cx="0.45" cy="0.35" r="0.7"><stop offset="0" stop-color="#ffffff" stop-opacity="0.3"/><stop offset="0.5" stop-color="#52b460" stop-opacity="0"/></radialGradient></defs><circle cx="7.5" cy="7.5" r="7" fill="#52b460" stroke="#2f7a3a" stroke-width="1"/><circle cx="7.5" cy="7.5" r="6.5" fill="url(#k14)"/></svg>
<div class="a" style="left:164px;top:485px;width:25px;height:20px;background:#dcdfe4;"></div>
<div class="a" style="left:164px;top:505px;width:1019px;height:1px;background:#d5d8dd;"></div>
<svg class="a" style="left:194px;top:486px" width="16" height="15" viewBox="0 0 16 15">
<defs><linearGradient id="pt" x1="0" y1="0" x2="0" y2="1"><stop offset="0" stop-color="#9cb6dc"/><stop offset="1" stop-color="#4f76b4"/></linearGradient>
<linearGradient id="po" x1="0" y1="0" x2="0" y2="1"><stop offset="0" stop-color="#a9bedc"/><stop offset="1" stop-color="#4f6f9c"/></linearGradient></defs>
<rect x="0.5" y="0.5" width="15" height="14" fill="#fff" stroke="#2c3542"/>
<rect x="0.5" y="0.5" width="15" height="2.4" fill="url(#pt)" stroke="#3c5c8e" stroke-width="0.6"/>
<path d="M5.3 8.5V14.5M10.5 5.5V10.5M10.5 12.5V14.5" stroke="#3a4350" stroke-width="0.7"/>
<path d="M2.4 6V4.6H13.4V6" fill="none" stroke="#111" stroke-width="1.2"/>
<rect x="2.3" y="6.6" width="6.4" height="2.2" rx="1.1" fill="url(#po)" stroke="#18222f" stroke-width="0.9"/>
<rect x="7.2" y="10.3" width="6.4" height="2.4" rx="1.2" fill="url(#po)" stroke="#18222f" stroke-width="0.9"/>
</svg>
<div class="t" style="left:257.4px;top:489.87px;font-size:11.5px;color:#266585;letter-spacing:0.65px;">Workflow Analysis</div>
<div class="t" style="left:607.0px;top:489.87px;font-size:11.5px;color:#2b2b2b;letter-spacing:0.98px;">1/30/2013</div>
<div class="t" style="left:707.0px;top:489.87px;font-size:11.5px;color:#2b2b2b;letter-spacing:0.98px;">2/7/2014</div>
<div class="t" style="left:807.0px;top:489.87px;font-size:11.5px;color:#2b2b2b;letter-spacing:0.7px;">2,338h</div>
<div class="t" style="left:907.0px;top:489.87px;font-size:11.5px;color:#2b2b2b;letter-spacing:0.7px;">0%</div>
<div class="t" style="left:987.0px;top:489.87px;font-size:11.5px;color:#2b2b2b;letter-spacing:0.7px;">2,338h</div>
<svg class="a" style="left:1112px;top:487px" width="15" height="15" viewBox="0 0 15 15"><circle cx="7.5" cy="7.5" r="7" fill="#fff" stroke="#8d8d8d" stroke-width="1"/></svg>
<div class="a" style="left:164px;top:506px;width:25px;height:20px;background:#dcdfe4;"></div>
<div class="a" style="left:189px;top:506px;width:994px;height:20px;background:#fff6c7;"></div>
<div class="a" style="left:164px;top:526px;width:1019px;height:1px;background:#d5d8dd;"></div>
<div class="a" style="left:164px;top:526px;width:25px;height:1px;background:#c7cbd1;"></div>
<svg class="a" style="left:231px;top:511px" width="10" height="10" viewBox="0 0 10 10"><defs><linearGradient id="mb16" x1="0" y1="0" x2="0" y2="1"><stop offset="0" stop-color="#f4f7fb"/><stop offset="1" stop-color="#b4c2d4"/></linearGradient></defs><rect x="0.5" y="0.5" width="9" height="9" rx="1" fill="url(#mb16)" stroke="#6f7680"/><path d="M2.5 5H7.5" stroke="#1a1a1a" stroke-width="1.5"/></svg>
<div class="t" style="left:244.8px;top:510.87px;font-size:11.5px;color:#111;letter-spacing:1.0px;font-weight:700;-webkit-text-stroke:0.25px #111;">Enterprise Project Type Name: Software Development</div>
<div class="t" style="left:607.0px;top:510.87px;font-size:11.5px;color:#111;letter-spacing:2.4px;font-weight:700;-webkit-text-stroke:0.25px #111;">1/1/2013</div>
<div class="t" style="left:707.0px;top:510.87px;font-size:11.5px;color:#111;letter-spacing:2.4px;font-weight:700;-webkit-text-stroke:0.25px #111;">2/13/2015</div>
<div class="t" style="left:807.0px;top:510.87px;font-size:11.5px;color:#111;letter-spacing:1.9px;font-weight:700;-webkit-text-stroke:0.25px #111;">25,236.88h</div>
<div class="t" style="left:987.0px;top:510.87px;font-size:11.5px;color:#111;letter-spacing:1.9px;font-weight:700;-webkit-text-stroke:0.25px #111;">9,944.85h</div>
<div class="a" style="left:164px;top:527px;width:25px;height:20px;background:#dcdfe4;"></div>
<div class="a" style="left:164px;top:547px;width:1019px;height:1px;background:#d5d8dd;"></div>
<svg class="a" style="left:194px;top:528px" width="16" height="15" viewBox="0 0 16 15">
<defs><linearGradient id="pt" x1="0" y1="0" x2="0" y2="1"><stop offset="0" stop-color="#9cb6dc"/><stop offset="1" stop-color="#4f76b4"/></linearGradient>
<linearGradient id="po" x1="0" y1="0" x2="0" y2="1"><stop offset="0" stop-color="#a9bedc"/><stop offset="1" stop-color="#4f6f9c"/></linearGradient></defs>
<rect x="0.5" y="0.5" width="15" height="14" fill="#fff" stroke="#2c3542"/>
<rect x="0.5" y="0.5" width="15" height="2.4" fill="url(#pt)" stroke="#3c5c8e" stroke-width="0.6"/>
<path d="M5.3 8.5V14.5M10.5 5.5V10.5M10.5 12.5V14.5" stroke="#3a4350" stroke-width="0.7"/>
<path d="M2.4 6V4.6H13.4V6" fill="none" stroke="#111" stroke-width="1.2"/>
<rect x="2.3" y="6.6" width="6.4" height="2.2" rx="1.1" fill="url(#po)" stroke="#18222f" stroke-width="0.9"/>
<rect x="7.2" y="10.3" width="6.4" height="2.4" rx="1.2" fill="url(#po)" stroke="#18222f" stroke-width="0.9"/>
</svg>
<div class="t" style="left:257.4px;top:531.87px;font-size:11.5px;color:#266585;letter-spacing:0.65px;">Realtime Report Server Usage Statistics</div>
<div class="t" style="left:607.0px;top:531.87px;font-size:11.5px;color:#2b2b2b;letter-spacing:0.98px;">3/1/2013</div>
<div class="t" style="left:707.0px;top:531.87px;font-size:11.5px;color:#2b2b2b;letter-spacing:0.98px;">5/9/2013</div>
<div class="t" style="left:807.0px;top:531.87px;font-size:11.5px;color:#2b2b2b;letter-spacing:0.7px;">630h</div>
<div class="t" style="left:907.0px;top:531.87px;font-size:11.5px;color:#2b2b2b;letter-spacing:0.7px;">100%</div>
<div class="t" style="left:987.0px;top:531.87px;font-size:11.5px;color:#2b2b2b;letter-spacing:0.7px;">0h</div>
<svg class="a" style="left:1112px;top:529px" width="15" height="15" viewBox="0 0 15 15"><defs><radialGradient id="k17" cx="0.45" cy="0.35" r="0.7"><stop offset="0" stop-color="#ffffff" stop-opacity="0.3"/><stop offset="0.5" stop-color="#52b460" stop-opacity="0"/></radialGradient></defs><circle cx="7.5" cy="7.5" r="7" fill="#52b460" stroke="#2f7a3a" stroke-width="1"/><circle cx="7.5" cy="7.5" r="6.5" fill="url(#k17)"/></svg>
<div class="a" style="left:164px;top:548px;width:25px;height:20px;background:#dcdfe4;"></div>
<div class="a" style="left:164px;top:568px;width:1019px;height:1px;background:#d5d8dd;"></div>
<svg class="a" style="left:194px;top:549px" width="16" height="15" viewBox="0 0 16 15">
<defs><linearGradient id="pt" x1="0" y1="0" x2="0" y2="1"><stop offset="0" stop-color="#9cb6dc"/><stop offset="1" stop-color="#4f76b4"/></linearGradient>
<linearGradient id="po" x1="0" y1="0" x2="0" y2="1"><stop offset="0" stop-color="#a9bedc"/><stop offset="1" stop-color="#4f6f9c"/></linearGradient></defs>
<rect x="0.5" y="0.5" width="15" height="14" fill="#fff" stroke="#2c3542"/>
<rect x="0.5" y="0.5" width="15" height="2.4" fill="url(#pt)" stroke="#3c5c8e" stroke-width="0.6"/>
<path d="M5.3 8.5V14.5M10.5 5.5V10.5M10.5 12.5V14.5" stroke="#3a4350" stroke-width="0.7"/>
<path d="M2.4 6V4.6H13.4V6" fill="none" stroke="#111" stroke-width="1.2"/>
<rect x="2.3" y="6.6" width="6.4" height="2.2" rx="1.1" fill="url(#po)" stroke="#18222f" stroke-width="0.9"/>
<rect x="7.2" y="10.3" width="6.4" height="2.4" rx="1.2" fill="url(#po)" stroke="#18222f" stroke-width="0.9"/>
</svg>
<div class="t" style="left:257.4px;top:552.87px;font-size:11.5px;color:#266585;letter-spacing:0.65px;">Storage Planning and Management System</div>
<div class="t" style="left:607.0px;top:552.87px;font-size:11.5px;color:#2b2b2b;letter-spacing:0.98px;">5/13/2013</div>
<div class="t" style="left:707.0px;top:552.87px;font-size:11.5px;color:#2b2b2b;letter-spacing:0.98px;">8/5/2013</div>
<div class="t" style="left:807.0px;top:552.87px;font-size:11.5px;color:#2b2b2b;letter-spacing:0.7px;">641.95h</div>
<div class="t" style="left:907.0px;top:552.87px;font-size:11.5px;color:#2b2b2b;letter-spacing:0.7px;">100%</div>
<div class="t" style="left:987.0px;top:552.87px;font-size:11.5px;color:#2b2b2b;letter-spacing:0.7px;">0h</div>
<svg class="a" style="left:1112px;top:550px" width="15" height="15" viewBox="0 0 15 15"><defs><radialGradient id="k18" cx="0.45" cy="0.35" r="0.7"><stop offset="0" stop-color="#ffffff" stop-opacity="0.3"/><stop offset="0.5" stop-color="#52b460" stop-opacity="0"/></radialGradient></defs><circle cx="7.5" cy="7.5" r="7" fill="#52b460" stroke="#2f7a3a" stroke-width="1"/><circle cx="7.5" cy="7.5" r="6.5" fill="url(#k18)"/></svg>
<div class="a" style="left:164px;top:569px;width:25px;height:20px;background:#dcdfe4;"></div>
<div class="a" style="left:164px;top:589px;width:1019px;height:1px;background:#d5d8dd;"></div>
<svg class="a" style="left:194px;top:570px" width="16" height="15" viewBox="0 0 16 15">
<defs><linearGradient id="pt" x1="0" y1="0" x2="0" y2="1"><stop offset="0" stop-color="#9cb6dc"/><stop offset="1" stop-color="#4f76b4"/></linearGradient>
<linearGradient id="po" x1="0" y1="0" x2="0" y2="1"><stop offset="0" stop-color="#a9bedc"/><stop offset="1" stop-color="#4f6f9c"/></linearGradient></defs>
<rect x="0.5" y="0.5" width="15" height="14" fill="#fff" stroke="#2c3542"/>
<rect x="0.5" y="0.5" width="15" height="2.4" fill="url(#pt)" stroke="#3c5c8e" stroke-width="0.6"/>
<path d="M5.3 8.5V14.5M10.5 5.5V10.5M10.5 12.5V14.5" stroke="#3a4350" stroke-width="0.7"/>
<path d="M2.4 6V4.6H13.4V6" fill="none" stroke="#111" stroke-width="1.2"/>
<rect x="2.3" y="6.6" width="6.4" height="2.2" rx="1.1" fill="url(#po)" stroke="#18222f" stroke-width="0.9"/>
<rect x="7.2" y="10.3" width="6.4" height="2.4" rx="1.2" fill="url(#po)" stroke="#18222f" stroke-width="0.9"/>
</svg>
<svg class="a" style="left:214px;top:571px" width="12" height="13" viewBox="0 0 12 13">
<defs><linearGradient id="ib" x1="0" y1="0" x2="0" y2="1"><stop offset="0" stop-color="#f4eeee"/><stop offset="1" stop-color="#f08a8a"/></linearGradient></defs>
<rect x="0.5" y="0.5" width="11" height="12" fill="url(#ib)" stroke="#6e5e5e"/>
<rect x="1" y="1" width="10" height="1.3" fill="#ffffff"/>
<path d="M1 2.6H11" stroke="#8a7a7a" stroke-width="0.7"/>
<path d="M3 5.2H5.6M6.6 5.2H11M3 7.2H5.6M6.6 7.2H11" stroke="#6e3a34" stroke-width="1.2"/>
<path d="M3 9.2H5.6M6.6 9.2H11" stroke="#c02a2a" stroke-width="1.2"/>
</svg>
<div class="t" style="left:257.4px;top:573.87px;font-size:11.5px;color:#266585;letter-spacing:0.65px;">Employee Health Care Database</div>
<div class="t" style="left:607.0px;top:573.87px;font-size:11.5px;color:#2b2b2b;letter-spacing:0.98px;">2/11/2013</div>
<div class="t" style="left:707.0px;top:573.87px;font-size:11.5px;color:#2b2b2b;letter-spacing:0.98px;">12/9/2013</div>
<div class="t" style="left:807.0px;top:573.87px;font-size:11.5px;color:#2b2b2b;letter-spacing:0.7px;">947.66h</div>
<div class="t" style="left:907.0px;top:573.87px;font-size:11.5px;color:#2b2b2b;letter-spacing:0.7px;">84%</div>
<div class="t" style="left:987.0px;top:573.87px;font-size:11.5px;color:#2b2b2b;letter-spacing:0.7px;">160h</div>
<svg class="a" style="left:1112px;top:571px" width="15" height="15" viewBox="0 0 15 15"><defs><radialGradient id="k19" cx="0.45" cy="0.35" r="0.7"><stop offset="0" stop-color="#ffffff" stop-opacity="0.3"/><stop offset="0.5" stop-color="#52b460" stop-opacity="0"/></radialGradient></defs><circle cx="7.5" cy="7.5" r="7" fill="#52b460" stroke="#2f7a3a" stroke-width="1"/><circle cx="7.5" cy="7.5" r="6.5" fill="url(#k19)"/></svg>
<div class="a" style="left:164px;top:590px;width:25px;height:20px;background:#dcdfe4;"></div>
<div class="a" style="left:164px;top:610px;width:1019px;height:1px;background:#d5d8dd;"></div>
<svg class="a" style="left:194px;top:591px" width="16" height="15" viewBox="0 0 16 15">
<defs><linearGradient id="pt" x1="0" y1="0" x2="0" y2="1"><stop offset="0" stop-color="#9cb6dc"/><stop offset="1" stop-color="#4f76b4"/></linearGradient>
<linearGradient id="po" x1="0" y1="0" x2="0" y2="1"><stop offset="0" stop-color="#a9bedc"/><stop offset="1" stop-color="#4f6f9c"/></linearGradient></defs>
<rect x="0.5" y="0.5" width="15" height="14" fill="#fff" stroke="#2c3542"/>
<rect x="0.5" y="0.5" width="15" height="2.4" fill="url(#pt)" stroke="#3c5c8e" stroke-width="0.6"/>
<path d="M5.3 8.5V14.5M10.5 5.5V10.5M10.5 12.5V14.5" stroke="#3a4350" stroke-width="0.7"/>
<path d="M2.4 6V4.6H13.4V6" fill="none" stroke="#111" stroke-width="1.2"/>
<rect x="2.3" y="6.6" width="6.4" height="2.2" rx="1.1" fill="url(#po)" stroke="#18222f" stroke-width="0.9"/>
<rect x="7.2" y="10.3" width="6.4" height="2.4" rx="1.2" fill="url(#po)" stroke="#18222f" stroke-width="0.9"/>
</svg>
<div class="t" style="left:257.4px;top:594.87px;font-size:11.5px;color:#266585;letter-spacing:0.65px;">Tornado Infrastructure Development</div>
<div class="t" style="left:607.0px;top:594.87px;font-size:11.5px;color:#2b2b2b;letter-spacing:0.98px;">4/1/2013</div>
<div class="t" style="left:707.0px;top:594.87px;font-size:11.5px;color:#2b2b2b;letter-spacing:0.98px;">1/20/2014</div>
<div class="t" style="left:807.0px;top:594.87px;font-size:11.5px;color:#2b2b2b;letter-spacing:0.7px;">1,890.64h</div>
<div class="t" style="left:907.0px;top:594.87px;font-size:11.5px;color:#2b2b2b;letter-spacing:0.7px;">76%</div>
<div class="t" style="left:987.0px;top:594.87px;font-size:11.5px;color:#2b2b2b;letter-spacing:0.7px;">445.97h</div>
<svg class="a" style="left:1112px;top:592px" width="15" height="15" viewBox="0 0 15 15"><defs><radialGradient id="k20" cx="0.45" cy="0.35" r="0.7"><stop offset="0" stop-color="#ffffff" stop-opacity="0.3"/><stop offset="0.5" stop-color="#52b460" stop-opacity="0"/></radialGradient></defs><circle cx="7.5" cy="7.5" r="7" fill="#52b460" stroke="#2f7a3a" stroke-width="1"/><circle cx="7.5" cy="7.5" r="6.5" fill="url(#k20)"/></svg>
<div class="a" style="left:164px;top:611px;width:25px;height:20px;background:#dcdfe4;"></div>
<div class="a" style="left:164px;top:631px;width:1019px;height:1px;background:#d5d8dd;"></div>
<svg class="a" style="left:194px;top:612px" width="16" height="15" viewBox="0 0 16 15">
<defs><linearGradient id="pt" x1="0" y1="0" x2="0" y2="1"><stop offset="0" stop-color="#9cb6dc"/><stop offset="1" stop-color="#4f76b4"/></linearGradient>
<linearGradient id="po" x1="0" y1="0" x2="0" y2="1"><stop offset="0" stop-color="#a9bedc"/><stop offset="1" stop-color="#4f6f9c"/></linearGradient></defs>
<rect x="0.5" y="0.5" width="15" height="14" fill="#fff" stroke="#2c3542"/>
<rect x="0.5" y="0.5" width="15" height="2.4" fill="url(#pt)" stroke="#3c5c8e" stroke-width="0.6"/>
<path d="M5.3 8.5V14.5M10.5 5.5V10.5M10.5 12.5V14.5" stroke="#3a4350" stroke-width="0.7"/>
<path d="M2.4 6V4.6H13.4V6" fill="none" stroke="#111" stroke-width="1.2"/>
<rect x="2.3" y="6.6" width="6.4" height="2.2" rx="1.1" fill="url(#po)" stroke="#18222f" stroke-width="0.9"/>
<rect x="7.2" y="10.3" width="6.4" height="2.4" rx="1.2" fill="url(#po)" stroke="#18222f" stroke-width="0.9"/>
</svg>
<svg class="a" style="left:214px;top:613px" width="12" height="13" viewBox="0 0 12 13">
<defs><linearGradient id="ib" x1="0" y1="0" x2="0" y2="1"><stop offset="0" stop-color="#f4eeee"/><stop offset="1" stop-color="#f08a8a"/></linearGradient></defs>
<rect x="0.5" y="0.5" width="11" height="12" fill="url(#ib)" stroke="#6e5e5e"/>
<rect x="1" y="1" width="10" height="1.3" fill="#ffffff"/>
<path d="M1 2.6H11" stroke="#8a7a7a" stroke-width="0.7"/>
<path d="M3 5.2H5.6M6.6 5.2H11M3 7.2H5.6M6.6 7.2H11" stroke="#6e3a34" stroke-width="1.2"/>
<path d="M3 9.2H5.6M6.6 9.2H11" stroke="#c02a2a" stroke-width="1.2"/>
</svg>
<div class="t" style="left:257.4px;top:615.87px;font-size:11.5px;color:#266585;letter-spacing:0.65px;">Butterball API for Drone Flyer</div>
<div class="t" style="left:607.0px;top:615.87px;font-size:11.5px;color:#2b2b2b;letter-spacing:0.98px;">2/11/2013</div>
<div class="t" style="left:707.0px;top:615.87px;font-size:11.5px;color:#2b2b2b;letter-spacing:0.98px;">1/23/2014</div>
<div class="t" style="left:807.0px;top:615.87px;font-size:11.5px;color:#2b2b2b;letter-spacing:0.7px;">3,306.99h</div>
<div class="t" style="left:907.0px;top:615.87px;font-size:11.5px;color:#2b2b2b;letter-spacing:0.7px;">76%</div>
<div class="t" style="left:987.0px;top:615.87px;font-size:11.5px;color:#2b2b2b;letter-spacing:0.7px;">637.86h</div>
<svg class="a" style="left:1112px;top:613px" width="15" height="15" viewBox="0 0 15 15"><defs><radialGradient id="k21" cx="0.45" cy="0.35" r="0.7"><stop offset="0" stop-color="#ffffff" stop-opacity="0.3"/><stop offset="0.5" stop-color="#52b460" stop-opacity="0"/></radialGradient></defs><circle cx="7.5" cy="7.5" r="7" fill="#52b460" stroke="#2f7a3a" stroke-width="1"/><circle cx="7.5" cy="7.5" r="6.5" fill="url(#k21)"/></svg>
<div class="a" style="left:164px;top:632px;width:25px;height:20px;background:#dcdfe4;"></div>
<div class="a" style="left:164px;top:652px;width:1019px;height:1px;background:#d5d8dd;"></div>
<svg class="a" style="left:194px;top:633px" width="16" height="15" viewBox="0 0 16 15">
<defs><linearGradient id="pt" x1="0" y1="0" x2="0" y2="1"><stop offset="0" stop-color="#9cb6dc"/><stop offset="1" stop-color="#4f76b4"/></linearGradient>
<linearGradient id="po" x1="0" y1="0" x2="0" y2="1"><stop offset="0" stop-color="#a9bedc"/><stop offset="1" stop-color="#4f6f9c"/></linearGradient></defs>
<rect x="0.5" y="0.5" width="15" height="14" fill="#fff" stroke="#2c3542"/>
<rect x="0.5" y="0.5" width="15" height="2.4" fill="url(#pt)" stroke="#3c5c8e" stroke-width="0.6"/>
<path d="M5.3 8.5V14.5M10.5 5.5V10.5M10.5 12.5V14.5" stroke="#3a4350" stroke-width="0.7"/>
<path d="M2.4 6V4.6H13.4V6" fill="none" stroke="#111" stroke-width="1.2"/>
<rect x="2.3" y="6.6" width="6.4" height="2.2" rx="1.1" fill="url(#po)" stroke="#18222f" stroke-width="0.9"/>
<rect x="7.2" y="10.3" width="6.4" height="2.4" rx="1.2" fill="url(#po)" stroke="#18222f" stroke-width="0.9"/>
</svg>
<svg class="a" style="left:214px;top:634px" width="12" height="13" viewBox="0 0 12 13">
<defs><linearGradient id="ib" x1="0" y1="0" x2="0" y2="1"><stop offset="0" stop-color="#f4eeee"/><stop offset="1" stop-color="#f08a8a"/></linearGradient></defs>
<rect x="0.5" y="0.5" width="11" height="12" fill="url(#ib)" stroke="#6e5e5e"/>
<rect x="1" y="1" width="10" height="1.3" fill="#ffffff"/>
<path d="M1 2.6H11" stroke="#8a7a7a" stroke-width="0.7"/>
<path d="M3 5.2H5.6M6.6 5.2H11M3 7.2H5.6M6.6 7.2H11" stroke="#6e3a34" stroke-width="1.2"/>
<path d="M3 9.2H5.6M6.6 9.2H11" stroke="#c02a2a" stroke-width="1.2"/>
</svg>
<div class="t" style="left:257.4px;top:636.87px;font-size:11.5px;color:#266585;letter-spacing:0.65px;">Develop a Ledger Tracking system for Newco</div>
<div class="t" style="left:607.0px;top:636.87px;font-size:11.5px;color:#2b2b2b;letter-spacing:0.98px;">6/3/2013</div>
<div class="t" style="left:707.0px;top:636.87px;font-size:11.5px;color:#2b2b2b;letter-spacing:0.98px;">1/28/2014</div>
<div class="t" style="left:807.0px;top:636.87px;font-size:11.5px;color:#2b2b2b;letter-spacing:0.7px;">1,374h</div>
<div class="t" style="left:907.0px;top:636.87px;font-size:11.5px;color:#2b2b2b;letter-spacing:0.7px;">68%</div>
<div class="t" style="left:987.0px;top:636.87px;font-size:11.5px;color:#2b2b2b;letter-spacing:0.7px;">389h</div>
<svg class="a" style="left:1112px;top:634px" width="15" height="15" viewBox="0 0 15 15"><defs><radialGradient id="k22" cx="0.45" cy="0.35" r="0.7"><stop offset="0" stop-color="#ffffff" stop-opacity="0.3"/><stop offset="0.5" stop-color="#52b460" stop-opacity="0"/></radialGradient></defs><circle cx="7.5" cy="7.5" r="7" fill="#52b460" stroke="#2f7a3a" stroke-width="1"/><circle cx="7.5" cy="7.5" r="6.5" fill="url(#k22)"/></svg>
<div class="a" style="left:164px;top:653px;width:25px;height:20px;background:#dcdfe4;"></div>
<div class="a" style="left:164px;top:673px;width:1019px;height:1px;background:#d5d8dd;"></div>
<svg class="a" style="left:194px;top:654px" width="16" height="15" viewBox="0 0 16 15">
<defs><linearGradient id="pt" x1="0" y1="0" x2="0" y2="1"><stop offset="0" stop-color="#9cb6dc"/><stop offset="1" stop-color="#4f76b4"/></linearGradient>
<linearGradient id="po" x1="0" y1="0" x2="0" y2="1"><stop offset="0" stop-color="#a9bedc"/><stop offset="1" stop-color="#4f6f9c"/></linearGradient></defs>
<rect x="0.5" y="0.5" width="15" height="14" fill="#fff" stroke="#2c3542"/>
<rect x="0.5" y="0.5" width="15" height="2.4" fill="url(#pt)" stroke="#3c5c8e" stroke-width="0.6"/>
<path d="M5.3 8.5V14.5M10.5 5.5V10.5M10.5 12.5V14.5" stroke="#3a4350" stroke-width="0.7"/>
<path d="M2.4 6V4.6H13.4V6" fill="none" stroke="#111" stroke-width="1.2"/>
<rect x="2.3" y="6.6" width="6.4" height="2.2" rx="1.1" fill="url(#po)" stroke="#18222f" stroke-width="0.9"/>
<rect x="7.2" y="10.3" width="6.4" height="2.4" rx="1.2" fill="url(#po)" stroke="#18222f" stroke-width="0.9"/>
</svg>
<svg class="a" style="left:214px;top:655px" width="12" height="13" viewBox="0 0 12 13">
<defs><linearGradient id="ib" x1="0" y1="0" x2="0" y2="1"><stop offset="0" stop-color="#f4eeee"/><stop offset="1" stop-color="#f08a8a"/></linearGradient></defs>
<rect x="0.5" y="0.5" width="11" height="12" fill="url(#ib)" stroke="#6e5e5e"/>
<rect x="1" y="1" width="10" height="1.3" fill="#ffffff"/>
<path d="M1 2.6H11" stroke="#8a7a7a" stroke-width="0.7"/>
<path d="M3 5.2H5.6M6.6 5.2H11M3 7.2H5.6M6.6 7.2H11" stroke="#6e3a34" stroke-width="1.2"/>
<path d="M3 9.2H5.6M6.6 9.2H11" stroke="#c02a2a" stroke-width="1.2"/>
</svg>
<div class="t" style="left:257.4px;top:657.87px;font-size:11.5px;color:#266585;letter-spacing:0.65px;">Develop Hammerhead Interface</div>
<div class="t" style="left:607.0px;top:657.87px;font-size:11.5px;color:#2b2b2b;letter-spacing:0.98px;">1/1/2013</div>
<div class="t" style="left:707.0px;top:657.87px;font-size:11.5px;color:#2b2b2b;letter-spacing:0.98px;">2/5/2014</div>
<div class="t" style="left:807.0px;top:657.87px;font-size:11.5px;color:#2b2b2b;letter-spacing:0.7px;">2,170h</div>
<div class="t" style="left:907.0px;top:657.87px;font-size:11.5px;color:#2b2b2b;letter-spacing:0.7px;">83%</div>
<div class="t" style="left:987.0px;top:657.87px;font-size:11.5px;color:#2b2b2b;letter-spacing:0.7px;">293.6h</div>
<svg class="a" style="left:1112px;top:655px" width="15" height="15" viewBox="0 0 15 15"><defs><radialGradient id="k23" cx="0.45" cy="0.35" r="0.7"><stop offset="0" stop-color="#ffffff" stop-opacity="0.3"/><stop offset="0.5" stop-color="#f8d454" stop-opacity="0"/></radialGradient></defs><circle cx="7.5" cy="7.5" r="7" fill="#f8d454" stroke="#c99a2c" stroke-width="1"/><circle cx="7.5" cy="7.5" r="6.5" fill="url(#k23)"/></svg>
<div class="a" style="left:164px;top:674px;width:25px;height:20px;background:#dcdfe4;"></div>
<div class="a" style="left:164px;top:694px;width:1019px;height:1px;background:#d5d8dd;"></div>
<svg class="a" style="left:194px;top:675px" width="16" height="15" viewBox="0 0 16 15">
<defs><linearGradient id="pt" x1="0" y1="0" x2="0" y2="1"><stop offset="0" stop-color="#9cb6dc"/><stop offset="1" stop-color="#4f76b4"/></linearGradient>
<linearGradient id="po" x1="0" y1="0" x2="0" y2="1"><stop offset="0" stop-color="#a9bedc"/><stop offset="1" stop-color="#4f6f9c"/></linearGradient></defs>
<rect x="0.5" y="0.5" width="15" height="14" fill="#fff" stroke="#2c3542"/>
<rect x="0.5" y="0.5" width="15" height="2.4" fill="url(#pt)" stroke="#3c5c8e" stroke-width="0.6"/>
<path d="M5.3 8.5V14.5M10.5 5.5V10.5M10.5 12.5V14.5" stroke="#3a4350" stroke-width="0.7"/>
<path d="M2.4 6V4.6H13.4V6" fill="none" stroke="#111" stroke-width="1.2"/>
<rect x="2.3" y="6.6" width="6.4" height="2.2" rx="1.1" fill="url(#po)" stroke="#18222f" stroke-width="0.9"/>
<rect x="7.2" y="10.3" width="6.4" height="2.4" rx="1.2" fill="url(#po)" stroke="#18222f" stroke-width="0.9"/>
</svg>
<div class="t" style="left:257.4px;top:678.87px;font-size:11.5px;color:#266585;letter-spacing:0.65px;">Tacoma System R100 Design and Development</div>
<div class="t" style="left:607.0px;top:678.87px;font-size:11.5px;color:#2b2b2b;letter-spacing:0.98px;">4/8/2013</div>
<div class="t" style="left:707.0px;top:678.87px;font-size:11.5px;color:#2b2b2b;letter-spacing:0.98px;">2/14/2014</div>
<div class="t" style="left:807.0px;top:678.87px;font-size:11.5px;color:#2b2b2b;letter-spacing:0.7px;">2,398.04h</div>
<div class="t" style="left:907.0px;top:678.87px;font-size:11.5px;color:#2b2b2b;letter-spacing:0.7px;">77%</div>
<div class="t" style="left:987.0px;top:678.87px;font-size:11.5px;color:#2b2b2b;letter-spacing:0.7px;">550.05h</div>
<svg class="a" style="left:1112px;top:676px" width="15" height="15" viewBox="0 0 15 15"><defs><radialGradient id="k24" cx="0.45" cy="0.35" r="0.7"><stop offset="0" stop-color="#ffffff" stop-opacity="0.3"/><stop offset="0.5" stop-color="#52b460" stop-opacity="0"/></radialGradient></defs><circle cx="7.5" cy="7.5" r="7" fill="#52b460" stroke="#2f7a3a" stroke-width="1"/><circle cx="7.5" cy="7.5" r="6.5" fill="url(#k24)"/></svg>
<div class="a" style="left:164px;top:695px;width:25px;height:20px;background:#dcdfe4;"></div>
<div class="a" style="left:164px;top:715px;width:1019px;height:1px;background:#d5d8dd;"></div>
<svg class="a" style="left:194px;top:696px" width="16" height="15" viewBox="0 0 16 15">
<defs><linearGradient id="pt" x1="0" y1="0" x2="0" y2="1"><stop offset="0" stop-color="#9cb6dc"/><stop offset="1" stop-color="#4f76b4"/></linearGradient>
<linearGradient id="po" x1="0" y1="0" x2="0" y2="1"><stop offset="0" stop-color="#a9bedc"/><stop offset="1" stop-color="#4f6f9c"/></linearGradient></defs>
<rect x="0.5" y="0.5" width="15" height="14" fill="#fff" stroke="#2c3542"/>
<rect x="0.5" y="0.5" width="15" height="2.4" fill="url(#pt)" stroke="#3c5c8e" stroke-width="0.6"/>
<path d="M5.3 8.5V14.5M10.5 5.5V10.5M10.5 12.5V14.5" stroke="#3a4350" stroke-width="0.7"/>
<path d="M2.4 6V4.6H13.4V6" fill="none" stroke="#111" stroke-width="1.2"/>
<rect x="2.3" y="6.6" width="6.4" height="2.2" rx="1.1" fill="url(#po)" stroke="#18222f" stroke-width="0.9"/>
<rect x="7.2" y="10.3" width="6.4" height="2.4" rx="1.2" fill="url(#po)" stroke="#18222f" stroke-width="0.9"/>
</svg>
<div class="t" style="left:257.4px;top:699.87px;font-size:11.5px;color:#266585;letter-spacing:0.65px;">Tracking System for Finance</div>
<div class="t" style="left:607.0px;top:699.87px;font-size:11.5px;color:#2b2b2b;letter-spacing:0.98px;">5/28/2013</div>
<div class="t" style="left:707.0px;top:699.87px;font-size:11.5px;color:#2b2b2b;letter-spacing:0.98px;">2/20/2014</div>
<div class="t" style="left:807.0px;top:699.87px;font-size:11.5px;color:#2b2b2b;letter-spacing:0.7px;">624h</div>
<div class="t" style="left:907.0px;top:699.87px;font-size:11.5px;color:#2b2b2b;letter-spacing:0.7px;">88%</div>
<div class="t" style="left:987.0px;top:699.87px;font-size:11.5px;color:#2b2b2b;letter-spacing:0.7px;">77.4h</div>
<svg class="a" style="left:1112px;top:697px" width="15" height="15" viewBox="0 0 15 15"><defs><radialGradient id="k25" cx="0.45" cy="0.35" r="0.7"><stop offset="0" stop-color="#ffffff" stop-opacity="0.3"/><stop offset="0.5" stop-color="#e96262" stop-opacity="0"/></radialGradient></defs><circle cx="7.5" cy="7.5" r="7" fill="#e96262" stroke="#a84444" stroke-width="1"/><circle cx="7.5" cy="7.5" r="6.5" fill="url(#k25)"/></svg>
<div class="a" style="left:164px;top:716px;width:25px;height:20px;background:#dcdfe4;"></div>
<div class="a" style="left:164px;top:736px;width:1019px;height:1px;background:#d5d8dd;"></div>
<svg class="a" style="left:194px;top:717px" width="16" height="15" viewBox="0 0 16 15">
<defs><linearGradient id="pt" x1="0" y1="0" x2="0" y2="1"><stop offset="0" stop-color="#9cb6dc"/><stop offset="1" stop-color="#4f76b4"/></linearGradient>
<linearGradient id="po" x1="0" y1="0" x2="0" y2="1"><stop offset="0" stop-color="#a9bedc"/><stop offset="1" stop-color="#4f6f9c"/></linearGradient></defs>
<rect x="0.5" y="0.5" width="15" height="14" fill="#fff" stroke="#2c3542"/>
<rect x="0.5" y="0.5" width="15" height="2.4" fill="url(#pt)" stroke="#3c5c8e" stroke-width="0.6"/>
<path d="M5.3 8.5V14.5M10.5 5.5V10.5M10.5 12.5V14.5" stroke="#3a4350" stroke-width="0.7"/>
<path d="M2.4 6V4.6H13.4V6" fill="none" stroke="#111" stroke-width="1.2"/>
<rect x="2.3" y="6.6" width="6.4" height="2.2" rx="1.1" fill="url(#po)" stroke="#18222f" stroke-width="0.9"/>
<rect x="7.2" y="10.3" width="6.4" height="2.4" rx="1.2" fill="url(#po)" stroke="#18222f" stroke-width="0.9"/>
</svg>
<svg class="a" style="left:214px;top:718px" width="13" height="13" viewBox="0 0 13 13">
<path d="M6.5 0.5 L12.5 12.5 H0.5 Z" fill="#f3dc4a" stroke="#b8962a" stroke-width="0.8"/>
<path d="M6.5 3.5V8.5" stroke="#222" stroke-width="2"/>
<circle cx="6.5" cy="10.5" r="1" fill="#222"/>
</svg>
<div class="t" style="left:257.4px;top:720.87px;font-size:11.5px;color:#266585;letter-spacing:0.65px;">Capital Inventory Database</div>
<div class="t" style="left:607.0px;top:720.87px;font-size:11.5px;color:#2b2b2b;letter-spacing:0.98px;">6/10/2013</div>
<div class="t" style="left:707.0px;top:720.87px;font-size:11.5px;color:#2b2b2b;letter-spacing:0.98px;">3/11/2014</div>
<div class="t" style="left:807.0px;top:720.87px;font-size:11.5px;color:#2b2b2b;letter-spacing:0.7px;">2,555.4h</div>
<div class="t" style="left:907.0px;top:720.87px;font-size:11.5px;color:#2b2b2b;letter-spacing:0.7px;">50%</div>
<div class="t" style="left:987.0px;top:720.87px;font-size:11.5px;color:#2b2b2b;letter-spacing:0.7px;">1,109.75h</div>
<svg class="a" style="left:1112px;top:718px" width="15" height="15" viewBox="0 0 15 15"><defs><radialGradient id="k26" cx="0.45" cy="0.35" r="0.7"><stop offset="0" stop-color="#ffffff" stop-opacity="0.3"/><stop offset="0.5" stop-color="#52b460" stop-opacity="0"/></radialGradient></defs><circle cx="7.5" cy="7.5" r="7" fill="#52b460" stroke="#2f7a3a" stroke-width="1"/><circle cx="7.5" cy="7.5" r="6.5" fill="url(#k26)"/></svg>
<div class="a" style="left:189px;top:167px;width:39px;height:24px;box-sizing:border-box;border:2px solid #2e2a22;background:#fff4c0;"></div>
<div class="a" style="left:189px;top:169px;width:1px;height:565px;background:#d5d8dd;"></div>
<div class="a" style="left:227px;top:169px;width:1px;height:565px;background:#d5d8dd;"></div>
<div class="a" style="left:601px;top:169px;width:1px;height:565px;background:#d5d8dd;"></div>
<div class="a" style="left:701px;top:169px;width:1px;height:565px;background:#d5d8dd;"></div>
<div class="a" style="left:801px;top:169px;width:1px;height:565px;background:#d5d8dd;"></div>
<div class="a" style="left:901px;top:169px;width:1px;height:565px;background:#d5d8dd;"></div>
<div class="a" style="left:981px;top:169px;width:1px;height:565px;background:#d5d8dd;"></div>
<div class="a" style="left:1081px;top:169px;width:1px;height:565px;background:#d5d8dd;"></div>
<div class="a" style="left:1158px;top:169px;width:1px;height:565px;background:#d5d8dd;"></div>
<div class="a" style="left:164px;top:136px;width:1px;height:598px;background:#a9aeb5;"></div>
<div class="a" style="left:189px;top:169px;width:1px;height:565px;background:#c3c7cd;"></div>
<div class="a" style="left:1183px;top:136px;width:1px;height:598px;background:#b5b9bf;"></div>
<div class="a" style="left:1184px;top:136px;width:4px;height:598px;background:linear-gradient(90deg,#eceef1,#f6f7f8);"></div>
<div class="a" style="left:1188px;top:136px;width:1px;height:598px;background:#b5b9bf;"></div>
<div class="a" style="left:1184px;top:433px;width:4px;height:1px;background:#8f949a;"></div>
<div class="a" style="left:1184px;top:477px;width:4px;height:1px;background:#8f949a;"></div>
<div class="a" style="left:1184px;top:434px;width:4px;height:43px;background:linear-gradient(90deg,#dfe2e6,#f3f4f6);"></div>
<div class="a" style="left:1185px;top:452px;width:2px;height:1px;background:#6a6e74;"></div>
<div class="a" style="left:1185px;top:455px;width:2px;height:1px;background:#6a6e74;"></div>
<div class="a" style="left:1185px;top:458px;width:2px;height:1px;background:#6a6e74;"></div>
<div class="a" style="left:1189px;top:136px;width:56px;height:598px;background:#ffffff;"></div>
<div class="a" style="left:1189px;top:136px;width:56px;height:18px;background:linear-gradient(#d6e2e9 0px,#d9e3e9 5px,#dfe1e7 6px,#dfe1e7 100%);"></div>
<div class="a" style="left:1189px;top:154px;width:56px;height:14px;background:#dfe1e7;"></div>
<div class="a" style="left:1189px;top:154px;width:56px;height:1px;background:#c9ccd2;"></div>
<div class="a" style="left:1189px;top:168px;width:56px;height:1px;background:#a6abb2;"></div>
<div class="a" style="left:1206px;top:155px;width:1px;height:13px;background:#c3c7cd;"></div>
<div class="a" style="left:1224px;top:155px;width:1px;height:13px;background:#c3c7cd;"></div>
<div class="a" style="left:1242px;top:155px;width:1px;height:13px;background:#c3c7cd;"></div>
<div class="t" style="left:1189.0px;top:142.89px;font-size:11px;color:#333;letter-spacing:0.9px;">013</div>
<div class="t" style="left:1047.5px;width:300px;text-align:center;top:156.99px;font-size:11px;color:#333;letter-spacing:0px;text-indent:0px;">T</div>
<div class="t" style="left:1065.5px;width:300px;text-align:center;top:156.99px;font-size:11px;color:#333;letter-spacing:0px;text-indent:0px;">W</div>
<div class="t" style="left:1083.5px;width:300px;text-align:center;top:156.99px;font-size:11px;color:#333;letter-spacing:0px;text-indent:0px;">T</div>
<div class="a" style="left:1189px;top:173px;width:56px;height:6px;background:linear-gradient(#111 0px,#111 1px,#8c8c8c 2px,#9a9a9a 3px,#777 4px,#111 5px,#111 6px);"></div>
<div class="a" style="left:1189px;top:216px;width:56px;height:11px;background:linear-gradient(#3d63a6 0px,#6c8fc8 2px,#c4d3ec 5px,#a9bfe2 7px,#5a7fbd 9px,#2f5697 11px);"></div>
<div class="a" style="left:1189px;top:237px;width:56px;height:11px;background:linear-gradient(#3d63a6 0px,#6c8fc8 2px,#c4d3ec 5px,#a9bfe2 7px,#5a7fbd 9px,#2f5697 11px);"></div>
<div class="a" style="left:1189px;top:258px;width:56px;height:11px;background:linear-gradient(#3d63a6 0px,#6c8fc8 2px,#c4d3ec 5px,#a9bfe2 7px,#5a7fbd 9px,#2f5697 11px);"></div>
<div class="a" style="left:1189px;top:321px;width:56px;height:11px;background:linear-gradient(#3d63a6 0px,#6c8fc8 2px,#c4d3ec 5px,#a9bfe2 7px,#5a7fbd 9px,#2f5697 11px);"></div>
<div class="a" style="left:1189px;top:342px;width:56px;height:11px;background:linear-gradient(#3d63a6 0px,#6c8fc8 2px,#c4d3ec 5px,#a9bfe2 7px,#5a7fbd 9px,#2f5697 11px);"></div>
<div class="a" style="left:1189px;top:446px;width:56px;height:6px;background:linear-gradient(#111 0px,#111 1px,#8c8c8c 2px,#9a9a9a 3px,#777 4px,#111 5px,#111 6px);"></div>
<div class="a" style="left:1189px;top:489px;width:56px;height:11px;background:linear-gradient(#3d63a6 0px,#6c8fc8 2px,#c4d3ec 5px,#a9bfe2 7px,#5a7fbd 9px,#2f5697 11px);"></div>
<div class="a" style="left:1189px;top:509px;width:56px;height:6px;background:linear-gradient(#111 0px,#111 1px,#8c8c8c 2px,#9a9a9a 3px,#777 4px,#111 5px,#111 6px);"></div>
<div class="a" style="left:1189px;top:531px;width:56px;height:11px;background:linear-gradient(#3d63a6 0px,#6c8fc8 2px,#c4d3ec 5px,#a9bfe2 7px,#5a7fbd 9px,#2f5697 11px);"></div>
<div class="a" style="left:1189px;top:573px;width:56px;height:11px;background:linear-gradient(#3d63a6 0px,#6c8fc8 2px,#c4d3ec 5px,#a9bfe2 7px,#5a7fbd 9px,#2f5697 11px);"></div>
<div class="a" style="left:1189px;top:615px;width:56px;height:11px;background:linear-gradient(#3d63a6 0px,#6c8fc8 2px,#c4d3ec 5px,#a9bfe2 7px,#5a7fbd 9px,#2f5697 11px);"></div>
<div class="a" style="left:1189px;top:657px;width:56px;height:11px;background:linear-gradient(#3d63a6 0px,#6c8fc8 2px,#c4d3ec 5px,#a9bfe2 7px,#5a7fbd 9px,#2f5697 11px);"></div>
<div class="a" style="left:1245px;top:136px;width:17px;height:598px;background:linear-gradient(90deg,#e7e9ec,#f1f2f4);"></div>
<div class="a" style="left:1245px;top:136px;width:17px;height:19px;background:#f6f7f8;"></div>
<svg class="a" style="left:1250px;top:142px" width="8" height="5" viewBox="0 0 8 5"><path d="M0 5H8L4 0Z" fill="#6e7278"/></svg>
<div class="a" style="left:1246px;top:155px;width:15px;height:496px;box-sizing:border-box;border:1px solid #a9adb3;background:linear-gradient(90deg,#e9ebee,#dcdfe3 60%,#d4d7dc);"></div>
<div class="a" style="left:1251px;top:400px;width:6px;height:1px;background:#6b6f75;"></div>
<div class="a" style="left:1251px;top:403px;width:6px;height:1px;background:#6b6f75;"></div>
<div class="a" style="left:1251px;top:406px;width:6px;height:1px;background:#6b6f75;"></div>
<div class="a" style="left:0px;top:734px;width:1264px;height:3px;background:#000;"></div>
<div class="a" style="left:1262px;top:0px;width:2px;height:737px;background:#000;"></div>
<div class="a" style="left:0px;top:0px;width:4px;height:737px;background:#000;"></div>
<div class="a" style="left:0px;top:0px;width:1264px;height:4px;background:#000;"></div>
</body></html>
